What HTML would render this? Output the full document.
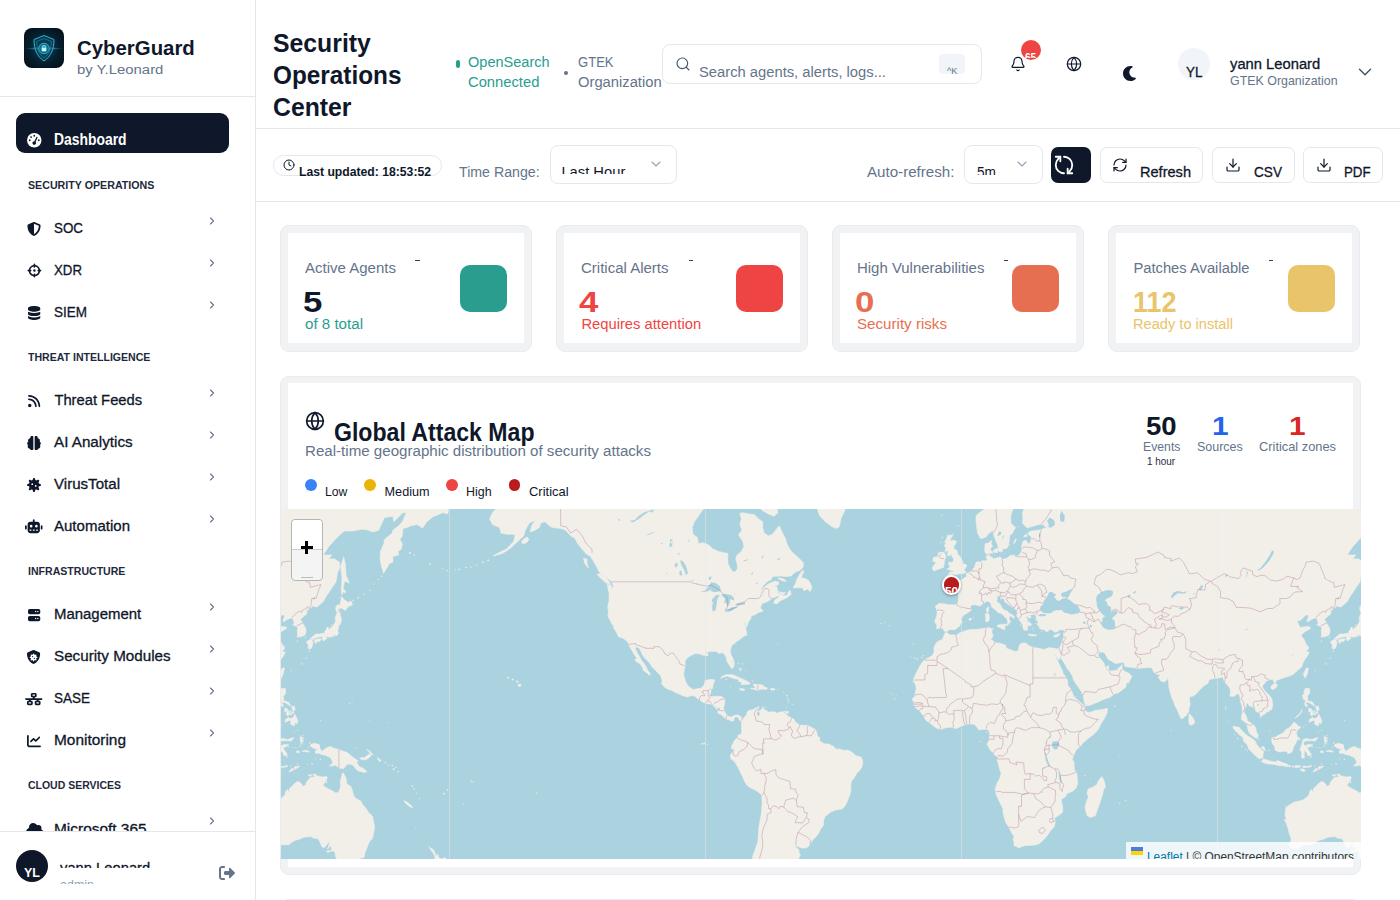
<!DOCTYPE html>
<html lang="en"><head><meta charset="utf-8"><title>CyberGuard - Security Operations Center</title>
<style>*{margin:0;padding:0}html,body{width:1400px;height:900px;overflow:hidden;background:#fff;font-family:"Liberation Sans",sans-serif}
.t{position:absolute;white-space:pre;line-height:1;transform-origin:0 0}.b{position:absolute}.clip{position:absolute;overflow:hidden}svg{display:block}</style></head>
<body>
<div class="b" style="left:255px;top:0px;width:1px;height:900px;background:#e5e7eb"></div>
<div class="b" style="left:0px;top:96px;width:255px;height:1px;background:#e5e7eb"></div>
<div class="b" style="left:0px;top:831px;width:255px;height:1px;background:#e5e7eb"></div>
<div class="b" style="left:16px;top:113px;width:212.5px;height:39.5px;background:#0f172a;border-radius:9px"></div>
<svg style="position:absolute;left:26.75px;top:133.35px;overflow:visible" width="14.50" height="14.5" viewBox="0 0 512 512" preserveAspectRatio="none"><path fill="#ffffff" d="M0 256a256 256 0 1 1 512 0 256 256 0 1 1-512 0M288 96a32 32 0 1 0-64 0 32 32 0 1 0 64 0m-32 320c35.3 0 64-28.7 64-64 0-16.2-6-31.1-16-42.3l69.5-138.9c5.9-11.9 1.1-26.3-10.7-32.2s-26.3-1.1-32.2 10.7l-69.5 138.9c-1.7-.1-3.4-.2-5.1-.2-35.3 0-64 28.7-64 64s28.7 64 64 64m-80-272a32 32 0 1 0-64 0 32 32 0 1 0 64 0M96 288a32 32 0 1 0 0-64 32 32 0 1 0 0 64m352-32a32 32 0 1 0-64 0 32 32 0 1 0 64 0"/></svg>
<svg style="position:absolute;left:27.00px;top:221.50px;overflow:visible" width="14.00" height="14" viewBox="0 0 512 512" preserveAspectRatio="none"><path fill="#0f172a" d="M256 0c4.6 0 9.2 1 13.4 2.9l188.4 79.9c22 9.3 38.4 31 38.3 57.2-.5 99.2-41.3 280.7-213.6 363.2-16.7 8-36.1 8-52.8 0C57.3 420.7 16.6 239.2 16.1 140c-.1-26.2 16.3-47.9 38.3-57.2L242.7 2.9C246.9 1 251.4 0 256 0m0 66.8v378.1c138-66.8 175.1-214.8 176-303.4L256 66.9z"/></svg>
<svg style="position:absolute;left:205.50px;top:215.00px;" width="12" height="12" viewBox="0 0 24 24" fill="none" stroke="#64748b" stroke-width="2.2" stroke-linecap="round" stroke-linejoin="round"><path d="m9 18 6-6-6-6"/></svg>
<svg style="position:absolute;left:26.57px;top:263.90px;overflow:visible" width="14.85" height="13.2" viewBox="0 0 576 512" preserveAspectRatio="none"><path fill="#0f172a" d="M288-16c17.7 0 32 14.3 32 32v18.3c98.1 14 175.7 91.6 189.7 189.7H528c17.7 0 32 14.3 32 32s-14.3 32-32 32h-18.3c-14 98.1-91.6 175.7-189.7 189.7V496c0 17.7-14.3 32-32 32s-32-14.3-32-32v-18.3c-98.1-14-175.7-91.6-189.7-189.7H48c-17.7 0-32-14.3-32-32s14.3-32 32-32h18.3c14-98.1 91.6-175.7 189.7-189.7V16c0-17.7 14.3-32 32-32M131.2 288c12.7 62.7 62.1 112.1 124.8 124.8V400c0-17.7 14.3-32 32-32s32 14.3 32 32v12.8c62.7-12.7 112.1-62.1 124.8-124.8H432c-17.7 0-32-14.3-32-32s14.3-32 32-32h12.8C432.1 161.3 382.7 111.9 320 99.2V112c0 17.7-14.3 32-32 32s-32-14.3-32-32V99.2c-62.7 12.7-112.1 62.1-124.8 124.8H144c17.7 0 32 14.3 32 32s-14.3 32-32 32zM288 208a48 48 0 1 1 0 96 48 48 0 1 1 0-96"/></svg>
<svg style="position:absolute;left:205.50px;top:257.00px;" width="12" height="12" viewBox="0 0 24 24" fill="none" stroke="#64748b" stroke-width="2.2" stroke-linecap="round" stroke-linejoin="round"><path d="m9 18 6-6-6-6"/></svg>
<svg style="position:absolute;left:27.88px;top:305.50px;overflow:visible" width="12.25" height="14" viewBox="0 0 448 512" preserveAspectRatio="none"><path fill="#0f172a" d="M448 205.8c-14.8 9.8-31.8 17.7-49.5 24-47 16.8-108.7 26.2-174.5 26.2s-127.6-9.5-174.5-26.2c-17.6-6.3-34.7-14.2-49.5-24V288c0 44.2 100.3 80 224 80s224-35.8 224-80zm0-77.8V80c0-44.2-100.3-80-224-80S0 35.8 0 80v48c0 44.2 100.3 80 224 80s224-35.8 224-80m-49.5 261.8C351.6 406.5 289.9 416 224 416s-127.6-9.5-174.5-26.2c-17.6-6.3-34.7-14.2-49.5-24V432c0 44.2 100.3 80 224 80s224-35.8 224-80v-66.2c-14.8 9.8-31.8 17.7-49.5 24"/></svg>
<svg style="position:absolute;left:205.50px;top:299.00px;" width="12" height="12" viewBox="0 0 24 24" fill="none" stroke="#64748b" stroke-width="2.2" stroke-linecap="round" stroke-linejoin="round"><path d="m9 18 6-6-6-6"/></svg>
<svg style="position:absolute;left:27.88px;top:393.50px;overflow:visible" width="12.25" height="14" viewBox="0 0 448 512" preserveAspectRatio="none"><path fill="#0f172a" d="M0 64c0-17.7 14.3-32 32-32 229.8 0 416 186.2 416 416 0 17.7-14.3 32-32 32s-32-14.3-32-32C384 253.6 226.4 96 32 96 14.3 96 0 81.7 0 64m0 352a64 64 0 1 1 128 0 64 64 0 1 1-128 0m32-256c159.1 0 288 128.9 288 288 0 17.7-14.3 32-32 32s-32-14.3-32-32c0-123.7-100.3-224-224-224-17.7 0-32-14.3-32-32s14.3-32 32-32"/></svg>
<svg style="position:absolute;left:205.50px;top:387.00px;" width="12" height="12" viewBox="0 0 24 24" fill="none" stroke="#64748b" stroke-width="2.2" stroke-linecap="round" stroke-linejoin="round"><path d="m9 18 6-6-6-6"/></svg>
<svg style="position:absolute;left:27.00px;top:435.50px;overflow:visible" width="14.00" height="14" viewBox="0 0 512 512" preserveAspectRatio="none"><path fill="#0f172a" d="M120 56c0-30.9 25.1-56 56-56h24c17.7 0 32 14.3 32 32v448c0 17.7-14.3 32-32 32h-32c-29.8 0-54.9-20.4-62-48h-2c-44.2 0-80-35.8-80-80 0-18 6-34.6 16-48-19.4-14.6-32-37.8-32-64 0-30.9 17.6-57.8 43.2-71.1-7.1-12-11.2-26-11.2-40.9 0-44.2 35.8-80 80-80zm272 0v24c44.2 0 80 35.8 80 80 0 15-4.1 29-11.2 40.9C486.5 214.2 504 241 504 272c0 26.2-12.6 49.4-32 64 10 13.4 16 30 16 48 0 44.2-35.8 80-80 80h-2c-7.1 27.6-32.2 48-62 48h-32c-17.7 0-32-14.3-32-32V32c0-17.7 14.3-32 32-32h24c30.9 0 56 25.1 56 56"/></svg>
<svg style="position:absolute;left:205.50px;top:429.00px;" width="12" height="12" viewBox="0 0 24 24" fill="none" stroke="#64748b" stroke-width="2.2" stroke-linecap="round" stroke-linejoin="round"><path d="m9 18 6-6-6-6"/></svg>
<svg style="position:absolute;left:27.00px;top:477.50px;overflow:visible" width="14.00" height="14" viewBox="0 0 512 512" preserveAspectRatio="none"><path fill="#0f172a" d="M296 40c0-22.1-17.9-40-40-40s-40 17.9-40 40c0 44.1-53.3 66.1-84.5 35-15.6-15.6-40.9-15.6-56.6 0s-15.6 40.9 0 56.6c31.2 31.2 9.1 84.5-35 84.5-22.1 0-40 17.9-40 40s17.9 40 40 40c44.1 0 66.1 53.3 35 84.5-15.6 15.6-15.6 40.9 0 56.6s40.9 15.6 56.6 0c31.2-31.2 84.5-9.1 84.5 35 0 22.1 17.9 40 40 40s40-17.9 40-40c0-44.1 53.3-66.1 84.5-35 15.6 15.6 40.9 15.6 56.6 0s15.6-40.9 0-56.6c-31.2-31.2-9.1-84.5 35-84.5 22.1 0 40-17.9 40-40s-17.9-40-40-40c-44.1 0-66.1-53.3-35-84.5 15.6-15.6 15.6-40.9 0-56.6s-40.9-15.6-56.6 0c-31.2 31.1-84.5 9.1-84.5-35M160 224a32 32 0 1 1 64 0 32 32 0 1 1-64 0m160 32a32 32 0 1 1 0 64 32 32 0 1 1 0-64"/></svg>
<svg style="position:absolute;left:205.50px;top:471.00px;" width="12" height="12" viewBox="0 0 24 24" fill="none" stroke="#64748b" stroke-width="2.2" stroke-linecap="round" stroke-linejoin="round"><path d="m9 18 6-6-6-6"/></svg>
<svg style="position:absolute;left:25.25px;top:519.50px;overflow:visible" width="17.50" height="14" viewBox="0 0 640 512" preserveAspectRatio="none"><path fill="#0f172a" d="M352 0c0-17.7-14.3-32-32-32s-32 14.3-32 32v64h-96c-53 0-96 43-96 96v224c0 53 43 96 96 96h256c53 0 96-43 96-96V160c0-53-43-96-96-96h-96zM160 368c0-13.3 10.7-24 24-24h32c13.3 0 24 10.7 24 24s-10.7 24-24 24h-32c-13.3 0-24-10.7-24-24m120 0c0-13.3 10.7-24 24-24h32c13.3 0 24 10.7 24 24s-10.7 24-24 24h-32c-13.3 0-24-10.7-24-24m120 0c0-13.3 10.7-24 24-24h32c13.3 0 24 10.7 24 24s-10.7 24-24 24h-32c-13.3 0-24-10.7-24-24M224 176a48 48 0 1 1 0 96 48 48 0 1 1 0-96m144 48a48 48 0 1 1 96 0 48 48 0 1 1-96 0m-304 0c0-17.7-14.3-32-32-32S0 206.3 0 224v96c0 17.7 14.3 32 32 32s32-14.3 32-32zm544-32c-17.7 0-32 14.3-32 32v96c0 17.7 14.3 32 32 32s32-14.3 32-32v-96c0-17.7-14.3-32-32-32"/></svg>
<svg style="position:absolute;left:205.50px;top:513.00px;" width="12" height="12" viewBox="0 0 24 24" fill="none" stroke="#64748b" stroke-width="2.2" stroke-linecap="round" stroke-linejoin="round"><path d="m9 18 6-6-6-6"/></svg>
<svg style="position:absolute;left:27.88px;top:607.50px;overflow:visible" width="12.25" height="14" viewBox="0 0 448 512" preserveAspectRatio="none"><path fill="#0f172a" d="M64 32C28.7 32 0 60.7 0 96v64c0 35.3 28.7 64 64 64h320c35.3 0 64-28.7 64-64V96c0-35.3-28.7-64-64-64zm216 72a24 24 0 1 1 0 48 24 24 0 1 1 0-48m56 24a24 24 0 1 1 48 0 24 24 0 1 1-48 0M64 288c-35.3 0-64 28.7-64 64v64c0 35.3 28.7 64 64 64h320c35.3 0 64-28.7 64-64v-64c0-35.3-28.7-64-64-64zm216 72a24 24 0 1 1 0 48 24 24 0 1 1 0-48m56 24a24 24 0 1 1 48 0 24 24 0 1 1-48 0"/></svg>
<svg style="position:absolute;left:205.50px;top:601.00px;" width="12" height="12" viewBox="0 0 24 24" fill="none" stroke="#64748b" stroke-width="2.2" stroke-linecap="round" stroke-linejoin="round"><path d="m9 18 6-6-6-6"/></svg>
<svg style="position:absolute;left:27.00px;top:649.50px;overflow:visible" width="14.00" height="14" viewBox="0 0 512 512" preserveAspectRatio="none"><path fill="#0f172a" d="M253.4 2.9C249.2 1 244.7 0 240 0s-9.2 1-13.4 2.9L38.3 82.8C16.3 92.1-.1 113.8 0 140c.5 99.2 41.3 280.7 213.6 363.2 16.7 8 36.1 8 52.8 0C438.8 420.7 479.6 239.2 480 140c.1-26.2-16.3-47.9-38.3-57.2zM240 128c13.3 0 24 10.7 24 24 0 22.9 27.7 34.4 43.9 18.2 9.4-9.4 24.6-9.4 33.9 0s9.4 24.6 0 33.9c-16.2 16.2-4.7 43.9 18.2 43.9 13.3 0 24 10.7 24 24s-10.7 24-24 24c-22.9 0-34.4 27.7-18.2 43.9 9.4 9.4 9.4 24.6 0 33.9s-24.6 9.4-33.9 0c-16.2-16.2-43.9-4.7-43.9 18.2 0 13.3-10.7 24-24 24s-24-10.7-24-24c0-22.9-27.7-34.4-43.9-18.2-9.4 9.4-24.6 9.4-33.9 0s-9.4-24.6 0-33.9c16.2-16.2 4.7-43.9-18.2-43.9-13.3 0-24-10.7-24-24s10.7-24 24-24c22.9 0 34.4-27.7 18.2-43.9-9.4-9.4-9.4-24.6 0-33.9s24.6-9.4 33.9 0c16.2 16.2 43.9 4.7 43.9-18.2 0-13.3 10.7-24 24-24m-32 136a24 24 0 1 0 0-48 24 24 0 1 0 0 48m88 40a24 24 0 1 0-48 0 24 24 0 1 0 48 0"/></svg>
<svg style="position:absolute;left:205.50px;top:643.00px;" width="12" height="12" viewBox="0 0 24 24" fill="none" stroke="#64748b" stroke-width="2.2" stroke-linecap="round" stroke-linejoin="round"><path d="m9 18 6-6-6-6"/></svg>
<svg style="position:absolute;left:25.25px;top:691.50px;overflow:visible" width="17.50" height="14" viewBox="0 0 576 512" preserveAspectRatio="none"><path fill="#0f172a" d="M248 88h80v48h-80zm-8-56c-26.5 0-48 21.5-48 48v64c0 26.5 21.5 48 48 48h16v32H32c-17.7 0-32 14.3-32 32s14.3 32 32 32h96v32h-16c-26.5 0-48 21.5-48 48v64c0 26.5 21.5 48 48 48h96c26.5 0 48-21.5 48-48v-64c0-26.5-21.5-48-48-48h-16v-32h192v32h-16c-26.5 0-48 21.5-48 48v64c0 26.5 21.5 48 48 48h96c26.5 0 48-21.5 48-48v-64c0-26.5-21.5-48-48-48h-16v-32h96c17.7 0 32-14.3 32-32s-14.3-32-32-32H320v-32h16c26.5 0 48-21.5 48-48V80c0-26.5-21.5-48-48-48zm208 344h8v48h-80v-48zm-256 0h8v48h-80v-48z"/></svg>
<svg style="position:absolute;left:205.50px;top:685.00px;" width="12" height="12" viewBox="0 0 24 24" fill="none" stroke="#64748b" stroke-width="2.2" stroke-linecap="round" stroke-linejoin="round"><path d="m9 18 6-6-6-6"/></svg>
<svg style="position:absolute;left:27.00px;top:733.50px;overflow:visible" width="14.00" height="14" viewBox="0 0 512 512" preserveAspectRatio="none"><path fill="#0f172a" d="M64 64c0-17.7-14.3-32-32-32S0 46.3 0 64v336c0 44.2 35.8 80 80 80h400c17.7 0 32-14.3 32-32s-14.3-32-32-32H80c-8.8 0-16-7.2-16-16zm406.6 86.6c12.5-12.5 12.5-32.8 0-45.3s-32.8-12.5-45.3 0L320 210.7l-57.4-57.3c-12.5-12.5-32.8-12.5-45.3 0l-96 96c-12.5 12.5-12.5 32.8 0 45.3s32.8 12.5 45.3 0l73.4-73.4 57.4 57.4c12.5 12.5 32.8 12.5 45.3 0l128-128z"/></svg>
<svg style="position:absolute;left:205.50px;top:727.00px;" width="12" height="12" viewBox="0 0 24 24" fill="none" stroke="#64748b" stroke-width="2.2" stroke-linecap="round" stroke-linejoin="round"><path d="m9 18 6-6-6-6"/></svg>
<div class="clip" style="left:0;top:800px;width:255px;height:31px"><svg style="position:absolute;left:25.88px;top:21.85px;overflow:visible" width="17.44" height="15.5" viewBox="0 0 576 512" preserveAspectRatio="none"><path fill="#0f172a" d="M0 336c0 79.5 64.5 144 144 144h304c70.7 0 128-57.3 128-128 0-51.6-30.5-96.1-74.5-116.3 6.7-13.1 10.5-28 10.5-43.7 0-53-43-96-96-96-17.7 0-34.2 4.8-48.4 13.1C343.5 63.3 295.4 32 240 32 160.5 32 96 96.5 96 176c0 8 .7 15.9 1.9 23.5C41 218.7 0 272.6 0 336"/></svg></div>
<svg style="position:absolute;left:205.50px;top:815.00px;" width="12" height="12" viewBox="0 0 24 24" fill="none" stroke="#64748b" stroke-width="2.2" stroke-linecap="round" stroke-linejoin="round"><path d="m9 18 6-6-6-6"/></svg>
<div class="b" style="left:16px;top:850px;width:32px;height:32px;background:#0f172a;border-radius:50%"></div>
<svg style="position:absolute;left:219.40px;top:864.60px;overflow:visible" width="16.00" height="16" viewBox="0 0 512 512" preserveAspectRatio="none"><path fill="#64748b" d="M505 273c9.4-9.4 9.4-24.6 0-33.9L361 95c-6.9-6.9-17.2-8.9-26.2-5.2S320 102.3 320 112v80H208c-26.5 0-48 21.5-48 48v32c0 26.5 21.5 48 48 48h112v80c0 9.7 5.8 18.5 14.8 22.2s19.3 1.7 26.2-5.2zM160 96c17.7 0 32-14.3 32-32s-14.3-32-32-32H96C43 32 0 75 0 128v256c0 53 43 96 96 96h64c17.7 0 32-14.3 32-32s-14.3-32-32-32H96c-17.7 0-32-14.3-32-32V128c0-17.7 14.3-32 32-32z"/></svg>
<svg style="position:absolute;left:24px;top:28px" width="40" height="40" viewBox="0 0 40 40">
<defs><radialGradient id="lg" cx="50%" cy="50%" r="65%"><stop offset="0" stop-color="#0d4a63"/><stop offset="0.55" stop-color="#06202f"/><stop offset="1" stop-color="#030f18"/></radialGradient>
<radialGradient id="gl" cx="50%" cy="50%" r="50%"><stop offset="0" stop-color="#7fe9ff" stop-opacity="0.9"/><stop offset="1" stop-color="#22b8e0" stop-opacity="0"/></radialGradient>
<clipPath id="lc"><rect width="40" height="40" rx="8"/></clipPath></defs>
<g clip-path="url(#lc)"><rect width="40" height="40" fill="url(#lg)"/>
<ellipse cx="20" cy="20.500" rx="19" ry="1.6" fill="url(#gl)"/>
<path d="M20 7.5 L30 11.500 C30 21 27 28.500 20 33 C13 28.500 10 21 10 11.500 Z" fill="#0b4258" fill-opacity="0.55" stroke="#2fb6d8" stroke-width="1"/>
<path d="M20 10.500 L27.400 13.500 C27.300 20.500 25 26.500 20 30 C15 26.500 12.700 20.500 12.600 13.500 Z" fill="none" stroke="#1c86a6" stroke-width="0.7"/>
<circle cx="20" cy="20.500" r="5.200" fill="#12607d" stroke="#39c6e8" stroke-width="0.8"/>
<circle cx="20" cy="20.500" r="3.400" fill="#2fb6d8" fill-opacity="0.6"/>
<rect x="17.800" y="19.800" width="4.400" height="3.400" rx="0.6" fill="#c9f6ff"/>
<path d="M18.600 19.800 v-1 a1.400 1.400 0 0 1 2.800 0 v1" fill="none" stroke="#c9f6ff" stroke-width="0.7"/>
</g></svg>
<div class="b" style="left:256px;top:128px;width:1144px;height:1px;background:#e5e7eb"></div>
<div class="b" style="left:256px;top:201px;width:1144px;height:1px;background:#e5e7eb"></div>
<div class="b" style="left:456px;top:60px;width:3.6px;height:8px;background:#2a9d8f;border-radius:2px"></div>
<div class="b" style="left:563.6px;top:71px;width:4px;height:4px;background:#64748b;border-radius:50%"></div>
<div class="b" style="left:662px;top:44px;width:320px;height:40px;border:1px solid #e4e7ec;border-radius:8px;box-sizing:border-box;background:#fff"></div>
<svg style="position:absolute;left:674.60px;top:56.20px;" width="16" height="16" viewBox="0 0 24 24" fill="none" stroke="#475569" stroke-width="1.7" stroke-linecap="round" stroke-linejoin="round"><path d="m21 21-4.34-4.34"/><circle cx="11" cy="11" r="8"/></svg>
<div class="b" style="left:939.4px;top:54px;width:25.4px;height:20px;background:#f1f5f9;border-radius:4px"></div>
<svg style="position:absolute;left:1009.50px;top:56.00px;" width="16" height="16" viewBox="0 0 24 24" fill="none" stroke="#0f172a" stroke-width="1.8" stroke-linecap="round" stroke-linejoin="round"><path d="M10.268 21a2 2 0 0 0 3.464 0"/><path d="M3.262 15.326A1 1 0 0 0 4 17h16a1 1 0 0 0 .74-1.673C19.41 13.956 18 12.499 18 8A6 6 0 0 0 6 8c0 4.499-1.411 5.956-2.738 7.326"/></svg>
<div class="b" style="left:1021px;top:39.6px;width:20.4px;height:20.4px;background:#ef4444;border-radius:50%"></div>
<svg style="position:absolute;left:1065.60px;top:55.60px;" width="16" height="16" viewBox="0 0 24 24" fill="none" stroke="#0f172a" stroke-width="1.8" stroke-linecap="round" stroke-linejoin="round"><circle cx="12" cy="12" r="10"/><path d="M12 2a14.500 14.500 0 0 0 0 20 14.500 14.500 0 0 0 0-20"/><path d="M2 12h20"/></svg>
<svg style="position:absolute;left:1122.50px;top:65.80px;overflow:visible" width="15.00" height="15" viewBox="0 0 512 512" preserveAspectRatio="none"><path fill="#0f172a" d="M256 0C114.6 0 0 114.6 0 256s114.6 256 256 256c68.8 0 131.3-27.2 177.3-71.4 7.3-7 9.4-17.9 5.3-27.1s-13.7-14.9-23.8-14.1c-4.9.4-9.8.6-14.8.6-101.6 0-184-82.4-184-184 0-72.1 41.5-134.6 102.1-164.8 9.1-4.5 14.3-14.3 13.1-24.4s-8.6-18.3-18.5-20.5C294.4 2.2 275.4 0 256 0"/></svg>
<div class="b" style="left:1178px;top:48.4px;width:31.5px;height:31.5px;background:#f1f5f9;border-radius:50%"></div>
<svg style="position:absolute;left:1354.00px;top:61.40px;" width="22" height="22" viewBox="0 0 24 24" fill="none" stroke="#475569" stroke-width="1.6" stroke-linecap="round" stroke-linejoin="round"><path d="m6 9 6 6 6-6"/></svg>
<div class="b" style="left:272.5px;top:154.5px;width:169.5px;height:21.5px;border:1px solid #e4e7ec;border-radius:11px;box-sizing:border-box;background:#fff"></div>
<svg style="position:absolute;left:282.60px;top:159.00px;" width="12" height="12" viewBox="0 0 24 24" fill="none" stroke="#0f172a" stroke-width="2" stroke-linecap="round" stroke-linejoin="round"><path d="M12 6v6l4 2"/><circle cx="12" cy="12" r="10"/></svg>
<div class="b" style="left:549.5px;top:145.4px;width:127px;height:39px;border:1px solid #e4e7ec;border-radius:8px;box-sizing:border-box;background:#fff"></div>
<svg style="position:absolute;left:648.00px;top:156.40px;" width="16" height="16" viewBox="0 0 24 24" fill="none" stroke="#94a3b8" stroke-width="1.6" stroke-linecap="round" stroke-linejoin="round"><path d="m6 9 6 6 6-6"/></svg>
<div class="b" style="left:963.5px;top:145.4px;width:79px;height:39px;border:1px solid #e4e7ec;border-radius:8px;box-sizing:border-box;background:#fff"></div>
<svg style="position:absolute;left:1014.40px;top:156.40px;" width="16" height="16" viewBox="0 0 24 24" fill="none" stroke="#94a3b8" stroke-width="1.6" stroke-linecap="round" stroke-linejoin="round"><path d="m6 9 6 6 6-6"/></svg>
<div class="b" style="left:1051px;top:147px;width:39.6px;height:35.5px;background:#0f172a;border-radius:7px"></div>
<svg style="position:absolute;left:1053.40px;top:153.80px;transform:rotate(90deg)" width="22" height="22" viewBox="0 0 24 24" fill="none" stroke="#ffffff" stroke-width="2" stroke-linecap="round" stroke-linejoin="round"><path d="M3 12a9 9 0 0 1 9-9 9.750 9.750 0 0 1 6.740 2.740L21 8"/><path d="M21 3v5h-5"/><path d="M21 12a9 9 0 0 1-9 9 9.750 9.750 0 0 1-6.740-2.740L3 16"/><path d="M8 16H3v5"/></svg>
<div class="b" style="left:1099.5px;top:147px;width:103.5px;height:35.5px;border:1px solid #e4e7ec;border-radius:7px;box-sizing:border-box;background:#fff"></div>
<div class="b" style="left:1212.4px;top:147px;width:82.2px;height:35.5px;border:1px solid #e4e7ec;border-radius:7px;box-sizing:border-box;background:#fff"></div>
<div class="b" style="left:1303.4px;top:147px;width:80px;height:35.5px;border:1px solid #e4e7ec;border-radius:7px;box-sizing:border-box;background:#fff"></div>
<svg style="position:absolute;left:1111.60px;top:157.00px;" width="16" height="16" viewBox="0 0 24 24" fill="none" stroke="#0f172a" stroke-width="1.8" stroke-linecap="round" stroke-linejoin="round"><path d="M3 12a9 9 0 0 1 9-9 9.750 9.750 0 0 1 6.740 2.740L21 8"/><path d="M21 3v5h-5"/><path d="M21 12a9 9 0 0 1-9 9 9.750 9.750 0 0 1-6.740-2.740L3 16"/><path d="M8 16H3v5"/></svg>
<svg style="position:absolute;left:1225.00px;top:157.00px;" width="16" height="16" viewBox="0 0 24 24" fill="none" stroke="#0f172a" stroke-width="1.8" stroke-linecap="round" stroke-linejoin="round"><path d="M12 15V3"/><path d="M21 15v4a2 2 0 0 1-2 2H5a2 2 0 0 1-2-2v-4"/><path d="m7 10 5 5 5-5"/></svg>
<svg style="position:absolute;left:1316.00px;top:157.00px;" width="16" height="16" viewBox="0 0 24 24" fill="none" stroke="#0f172a" stroke-width="1.8" stroke-linecap="round" stroke-linejoin="round"><path d="M12 15V3"/><path d="M21 15v4a2 2 0 0 1-2 2H5a2 2 0 0 1-2-2v-4"/><path d="m7 10 5 5 5-5"/></svg>
<div class="b" style="left:280px;top:225px;width:252px;height:127px;background:#f1f2f4;border:1px solid #e9ebee;border-radius:9px;box-sizing:border-box"></div>
<div class="b" style="left:287.6px;top:233px;width:236.8px;height:110px;background:#fff"></div>
<div class="b" style="left:460px;top:264.6px;width:47.4px;height:47.4px;background:#2a9d8f;border-radius:10px"></div>
<div class="b" style="left:415.4px;top:259.6px;width:4.6px;height:1.2px;background:#334155"></div>
<div class="b" style="left:556px;top:225px;width:252px;height:127px;background:#f1f2f4;border:1px solid #e9ebee;border-radius:9px;box-sizing:border-box"></div>
<div class="b" style="left:563.6px;top:233px;width:236.8px;height:110px;background:#fff"></div>
<div class="b" style="left:736px;top:264.6px;width:47.4px;height:47.4px;background:#ef4444;border-radius:10px"></div>
<div class="b" style="left:688.7px;top:259.6px;width:4.6px;height:1.2px;background:#334155"></div>
<div class="b" style="left:832px;top:225px;width:252px;height:127px;background:#f1f2f4;border:1px solid #e9ebee;border-radius:9px;box-sizing:border-box"></div>
<div class="b" style="left:839.6px;top:233px;width:236.8px;height:110px;background:#fff"></div>
<div class="b" style="left:1012px;top:264.6px;width:47.4px;height:47.4px;background:#e76f51;border-radius:10px"></div>
<div class="b" style="left:1003.7px;top:259.6px;width:4.6px;height:1.2px;background:#334155"></div>
<div class="b" style="left:1108px;top:225px;width:252px;height:127px;background:#f1f2f4;border:1px solid #e9ebee;border-radius:9px;box-sizing:border-box"></div>
<div class="b" style="left:1115.6px;top:233px;width:236.8px;height:110px;background:#fff"></div>
<div class="b" style="left:1288px;top:264.6px;width:47.4px;height:47.4px;background:#e9c46a;border-radius:10px"></div>
<div class="b" style="left:1268.7px;top:259.6px;width:4.6px;height:1.2px;background:#334155"></div>
<div class="b" style="left:280px;top:375.5px;width:1080.5px;height:499.5px;background:#f1f2f4;border:1px solid #e9ebee;border-radius:9px;box-sizing:border-box"></div>
<div class="b" style="left:287.6px;top:383px;width:1065.4px;height:484px;background:#fff"></div>
<svg style="position:absolute;left:304.60px;top:411.40px;" width="20" height="20" viewBox="0 0 24 24" fill="none" stroke="#0f172a" stroke-width="2" stroke-linecap="round" stroke-linejoin="round"><circle cx="12" cy="12" r="10"/><path d="M12 2a14.500 14.500 0 0 0 0 20 14.500 14.500 0 0 0 0-20"/><path d="M2 12h20"/></svg>
<div class="b" style="left:304.90000000000003px;top:479.3px;width:11.8px;height:11.8px;background:#3b82f6;border-radius:50%"></div>
<div class="b" style="left:364.3px;top:479.3px;width:11.8px;height:11.8px;background:#eab308;border-radius:50%"></div>
<div class="b" style="left:446.1px;top:479.3px;width:11.8px;height:11.8px;background:#ef4444;border-radius:50%"></div>
<div class="b" style="left:508.5px;top:479.3px;width:11.8px;height:11.8px;background:#b91c1c;border-radius:50%"></div>
<div class="b" style="left:280px;top:899px;width:1080.5px;height:20px;background:#f1f2f4;border:1px solid #e9ebee;border-radius:9px;box-sizing:border-box"></div>
<svg style="position:absolute;left:280.5px;top:508.6px" width="1080" height="350" viewBox="280.5 508.6 1080 350"><rect x="280.5" y="508.6" width="1080" height="350" fill="#aad3df"/><g id="wm"><path d="M483.4 492.1L493.4 499.5L503.3 499.5L503.3 505.4L494.8 509.2L492.0 512.3L489.1 518.3L492.0 524.2L499.1 527.1L500.5 532.7L506.2 533.8L510.5 533.8L514.7 534.3L513.3 540.8L506.2 548.6L500.5 551.1L492.5 555.6L500.5 553.6L506.2 550.6L511.9 546.0L517.6 540.8L523.3 535.4L524.7 529.9L528.9 522.5L534.6 520.1L531.2 525.4L529.5 531.6L534.6 529.9L538.9 527.1L540.3 522.5L544.6 521.3L547.4 524.2L551.7 527.1L560.2 528.2L564.5 529.3L570.2 535.4L574.5 538.1L577.3 543.4L581.6 548.6L585.8 553.6L590.1 556.1L592.9 560.9L595.8 565.6L597.8 570.2L600.1 573.4L605.7 577.0L610.0 580.1L611.4 581.4L612.9 585.7L612.0 589.0L610.9 585.2L606.6 584.0L608.0 590.3L608.6 593.2L608.6 600.1L607.2 606.7L608.0 611.7L607.5 615.9L609.2 619.2L611.4 623.6L612.9 625.4L613.1 627.6L614.6 629.7L616.3 632.9L618.3 636.7L621.4 637.4L624.2 638.8L627.6 642.2L628.2 643.9L629.6 647.2L631.9 650.9L634.2 654.8L636.5 658.0L634.2 659.3L636.2 661.6L639.3 663.2L642.2 667.3L642.7 669.8L647.6 673.5L648.7 674.8L650.1 673.8L647.6 670.4L645.6 666.6L643.6 663.2L641.0 660.0L639.0 656.1L636.5 652.2L635.0 648.2L634.8 646.2L638.5 647.5L640.4 650.9L642.2 654.8L645.0 658.7L647.0 660.3L649.8 663.5L651.3 666.3L654.1 668.8L657.5 672.6L659.8 675.1L661.2 678.1L661.8 681.5L660.9 683.0L663.2 686.0L666.9 688.7L671.2 689.9L674.0 691.7L677.4 693.2L682.5 695.3L686.8 696.5L691.1 695.3L693.9 695.6L698.2 699.1L702.5 701.8L706.7 703.2L711.6 703.8L713.0 705.3L715.3 707.9L717.5 710.2L717.2 712.5L719.5 713.7L722.4 715.4L723.8 717.4L725.5 718.6L728.6 719.4L730.9 720.9L732.9 720.6L733.7 718.0L735.2 716.3L738.0 717.1L738.9 720.0L740.9 721.2L741.4 717.1L738.0 714.8L734.9 714.6L730.9 716.6L728.1 716.0L725.2 713.1L723.5 710.5L723.2 707.3L724.1 702.9L724.6 698.5L720.9 696.2L716.7 695.9L712.4 696.2L709.6 696.2L708.4 695.9L710.1 692.6L710.7 688.7L712.1 688.1L712.4 685.1L713.3 682.1L714.4 679.7L712.4 679.1L708.7 679.1L704.4 680.3L703.9 683.6L702.5 686.0L700.2 687.8L696.8 688.4L692.5 689.0L689.7 687.2L687.7 685.7L685.4 681.8L684.0 677.5L683.1 674.4L683.7 669.8L684.8 665.4L684.5 660.9L686.8 657.4L691.1 654.8L694.5 653.2L699.6 653.5L702.5 654.8L705.3 655.1L707.6 655.4L706.7 651.5L711.0 651.2L715.3 650.9L718.7 653.2L721.8 652.2L723.8 653.8L725.8 657.1L726.1 660.3L728.1 663.5L729.5 665.7L730.9 667.9L732.6 667.6L733.5 665.1L733.7 661.9L732.3 657.7L730.3 653.8L729.8 649.9L730.9 645.5L733.7 643.2L736.6 640.8L739.4 639.1L742.3 636.7L744.3 635.3L746.5 634.6L745.7 630.0L745.1 628.3L744.3 624.7L744.0 620.3L745.1 622.9L745.4 627.6L747.4 623.6L748.0 621.1L746.5 619.2L748.3 621.1L750.2 618.5L750.8 615.5L755.1 614.0L757.9 612.1L760.8 611.4L762.2 611.0L762.2 609.8L759.9 607.9L760.5 605.2L762.2 602.8L765.0 602.0L767.9 600.5L770.7 598.9L770.7 597.3L773.6 597.3L776.4 596.0L777.8 594.8L778.4 596.8L774.1 599.7L773.3 602.8L776.4 603.6L779.3 600.5L782.1 599.3L786.4 597.3L790.6 594.0L789.8 589.9L787.8 591.5L786.4 595.2L782.1 594.8L777.8 592.8L777.0 589.5L776.4 586.5L773.6 585.7L777.8 584.4L778.4 581.8L775.0 580.5L770.7 582.2L766.5 584.4L762.2 588.6L758.8 590.7L762.2 586.5L763.6 584.4L766.5 581.4L770.7 579.2L772.1 576.1L779.3 575.7L785.5 576.1L790.6 575.7L794.9 571.6L799.2 570.2L802.6 567.0L802.9 562.3L799.2 558.5L794.9 554.6L792.1 552.1L789.2 548.6L786.4 543.4L784.9 538.1L782.1 532.7L778.7 525.4L775.0 529.9L772.1 533.8L767.9 535.4L763.6 532.7L762.2 527.1L762.2 521.3L757.9 518.3L753.7 514.1L748.0 513.5L742.3 512.3L739.4 512.9L740.9 518.3L739.4 524.2L741.4 529.9L738.0 534.3L742.3 540.8L743.4 546.0L740.9 551.1L736.6 554.6L735.2 558.5L736.6 563.3L737.2 567.9L735.2 571.2L732.3 571.6L729.5 567.0L727.5 563.3L727.2 558.5L727.5 553.1L722.4 552.1L718.1 551.1L712.4 548.6L708.1 544.5L702.5 542.4L698.2 543.4L696.8 537.0L692.5 533.8L691.6 527.1L693.9 521.3L698.2 515.3L702.5 509.2L705.3 502.8L711.0 499.5L716.7 489.3L719.5 474.8L719.5 441.4L517.6 441.4L500.5 458.9L489.1 470.9L494.8 482.2L500.5 485.8L494.8 487.9ZM750.8 499.5L756.5 504.7L762.2 510.4L767.9 513.5L773.6 515.9L777.3 512.3L776.4 506.0L780.7 499.5L767.9 482.2L750.8 482.2ZM713.8 505.4L718.1 507.9L725.2 507.3L730.9 505.4L732.3 499.5L722.4 492.8L713.8 496.2ZM836.4 528.2L831.9 526.5L824.8 521.3L819.1 515.3L814.8 502.8L810.5 489.3L807.7 458.9L876.0 441.4L898.7 458.9L870.3 474.8L856.1 490.7L847.5 496.2L844.7 509.2L840.4 518.3L839.0 525.9ZM610.3 584.0L605.7 582.7L601.5 579.2L596.4 573.9L598.6 573.4L604.3 576.1L607.2 579.2ZM588.1 567.9L584.4 563.3L583.0 558.0L586.4 558.5L586.7 563.3ZM521.8 543.4L526.1 542.4L528.4 539.2L526.7 536.5L523.3 538.7L521.0 541.3ZM792.6 587.4L794.9 583.5L796.3 579.2L799.2 573.9L802.0 569.8L803.4 571.2L800.6 577.0L803.4 577.9L807.7 579.6L810.0 583.1L811.4 587.4L809.7 591.1L807.1 588.6L803.4 590.3L802.0 587.4L797.7 587.4ZM777.8 577.4L783.5 578.7L785.8 580.9L782.1 580.5L777.8 578.3ZM778.1 591.1L782.1 592.4L784.9 591.9L783.5 594.0L779.8 593.2ZM719.8 677.8L722.4 675.4L726.6 674.1L732.3 674.4L736.6 676.3L740.9 678.1L745.1 680.0L750.2 683.0L748.0 683.9L740.3 684.1L741.7 681.8L738.0 681.2L738.6 679.1L733.7 678.1L729.5 676.9L726.6 675.7L722.9 676.9ZM749.7 687.8L753.7 689.0L757.4 690.2L759.3 689.0L762.2 688.7L766.2 689.0L766.7 687.5L763.3 686.3L762.2 684.5L757.4 684.2L753.7 683.9L752.5 684.5L754.2 686.0L755.1 687.8ZM738.6 688.7L741.7 690.2L744.3 689.6L743.7 688.7L740.9 688.1ZM770.2 689.6L774.4 689.5L774.4 688.4L770.2 688.1ZM738.9 668.2L740.0 670.7L740.6 669.5L739.7 667.6ZM785.2 711.1L787.8 710.8L787.8 712.8L785.2 712.8ZM741.4 717.1L742.8 718.9L744.3 716.0L746.3 714.6L746.5 711.7L748.5 709.9L752.2 709.3L755.9 707.3L758.5 706.2L758.5 708.2L757.1 710.2L757.6 711.4L761.3 708.8L762.2 706.7L763.6 708.8L767.0 710.8L767.9 711.7L773.6 711.4L776.4 712.8L779.3 711.7L784.9 711.1L782.7 712.0L785.5 713.7L787.8 716.0L790.6 717.4L793.5 718.9L794.9 721.7L797.7 723.7L799.2 724.9L804.9 724.9L807.7 725.2L812.0 727.5L814.8 729.2L816.2 731.7L817.1 736.0L819.1 736.9L819.1 740.3L821.9 742.3L823.3 743.1L824.8 743.7L827.6 743.4L833.3 746.0L835.3 748.8L839.0 748.5L843.3 750.0L847.5 749.7L851.8 752.2L855.5 755.4L860.3 756.5L861.2 757.4L862.3 762.2L861.7 766.0L858.9 770.3L856.1 773.2L853.2 778.4L851.8 779.0L850.4 783.4L850.4 789.3L849.8 793.2L848.4 796.8L847.0 800.7L844.7 805.3L841.8 808.6L838.4 809.0L834.2 809.9L829.6 812.1L824.8 816.1L823.1 819.9L823.1 824.7L820.5 828.0L818.2 832.9L814.8 837.2L812.8 838.9L809.4 843.6L807.7 846.4L804.9 847.7L801.4 847.7L796.9 846.0L795.2 844.6L794.9 846.4L798.3 849.1L798.6 852.6L800.0 854.8L797.7 858.7L793.5 861.6L787.8 862.3L784.4 862.0L784.1 867.9L776.4 869.8L776.4 877.4L769.3 889.4L773.6 897.7L765.0 910.9L766.5 920.1L759.3 924.9L750.8 915.5L748.0 897.7L750.8 881.4L752.2 871.7L751.7 864.2L752.2 855.8L754.5 849.8L757.4 841.2L757.9 834.5L758.2 828.0L759.3 821.5L760.5 815.2L761.1 810.5L761.6 802.8L761.3 795.0L758.5 792.3L755.1 789.9L750.8 787.8L746.5 784.9L744.3 781.3L742.0 776.1L739.4 770.9L737.7 767.4L735.2 763.1L733.7 760.8L730.9 758.8L730.3 758.2L730.0 754.5L732.3 751.7L733.7 750.2L734.3 748.8L732.9 749.1L730.9 748.0L731.5 744.5L732.9 742.6L733.7 740.3L735.2 738.9L737.2 737.4L737.7 734.6L740.3 734.0L741.4 730.9L740.9 727.5L741.1 724.6L740.9 721.2ZM944.5 632.5L946.2 632.2L949.9 634.6L952.8 634.3L955.6 635.0L958.5 632.9L962.7 631.1L965.6 630.0L969.8 629.0L975.5 629.0L981.2 628.3L986.9 627.6L989.2 627.2L990.6 628.3L992.6 627.9L991.2 630.4L991.5 632.5L992.6 634.6L992.0 637.0L989.7 638.8L992.0 639.8L994.0 641.8L996.9 642.8L998.8 642.5L1002.5 643.9L1004.8 644.5L1006.0 647.9L1009.7 649.2L1013.9 650.9L1016.2 651.2L1018.2 648.9L1018.5 645.2L1021.0 642.8L1023.9 642.5L1027.3 643.9L1027.3 644.9L1032.4 646.9L1038.1 647.9L1043.8 649.2L1046.6 647.9L1049.5 647.2L1053.2 647.9L1053.7 652.2L1054.3 654.8L1055.7 657.7L1057.4 660.9L1059.4 665.1L1061.7 669.8L1062.6 672.9L1066.0 677.5L1067.1 680.6L1067.4 684.8L1070.8 689.6L1073.1 695.6L1073.7 696.8L1076.5 699.1L1079.3 701.5L1082.2 703.8L1084.5 705.9L1083.6 708.5L1086.5 711.7L1089.3 712.0L1095.0 709.9L1100.7 709.3L1106.9 707.9L1106.7 712.0L1104.9 716.0L1103.0 719.4L1100.7 723.2L1097.8 728.9L1093.6 733.7L1090.4 736.0L1086.5 738.9L1082.2 742.8L1079.3 746.5L1075.6 749.4L1074.2 753.1L1072.8 755.9L1071.7 759.4L1073.4 761.1L1073.7 766.0L1074.2 770.3L1076.2 771.7L1076.8 777.5L1077.1 783.4L1075.6 787.8L1072.2 790.8L1066.5 793.2L1065.1 796.2L1060.6 799.2L1061.7 804.3L1062.3 809.0L1062.0 812.1L1058.0 815.2L1054.6 817.1L1054.0 818.3L1054.9 821.5L1053.7 826.3L1050.9 829.6L1049.5 830.9L1046.6 835.5L1042.4 840.2L1038.1 843.6L1034.4 844.6L1029.6 845.0L1023.9 845.3L1018.2 847.4L1014.8 845.7L1013.6 845.3L1013.4 841.2L1012.5 839.5L1013.4 836.2L1010.5 831.2L1008.2 826.7L1005.4 822.5L1004.0 818.3L1002.5 812.1L1002.5 808.3L999.7 802.8L996.9 796.8L994.9 792.3L994.9 787.8L996.3 783.4L999.4 777.5L1000.6 773.2L998.8 767.4L997.4 761.7L996.3 758.8L995.4 755.9L993.4 753.1L989.7 749.7L987.8 746.0L986.3 743.7L988.3 740.8L988.9 737.4L989.2 734.6L988.9 731.7L988.3 730.3L986.3 728.9L984.9 728.9L981.2 729.2L978.4 729.5L976.4 726.6L974.1 724.0L971.0 723.5L967.0 723.7L964.7 724.3L961.3 725.5L958.5 726.9L955.3 728.3L952.2 727.2L949.9 726.9L945.7 727.2L940.0 729.2L935.7 727.5L930.6 723.7L928.6 722.0L925.7 720.3L923.8 717.4L923.5 715.1L922.3 714.6L920.1 711.7L918.6 710.2L915.8 707.9L913.8 706.2L913.5 703.8L913.5 701.5L911.5 699.4L912.9 697.1L914.4 695.6L914.9 691.1L915.8 688.1L915.2 685.1L914.4 683.0L912.8 681.2L912.9 679.1L914.9 674.4L916.4 671.3L918.9 666.6L920.1 664.4L922.9 660.3L924.6 659.0L928.6 657.1L932.3 654.5L933.7 650.9L933.4 647.5L934.8 643.9L937.1 641.1L939.7 640.1L942.0 638.8L943.4 635.3ZM1101.5 776.1L1104.1 781.9L1104.9 786.3L1103.0 789.3L1102.1 793.8L1099.3 802.8L1096.4 810.5L1095.0 815.2L1089.9 817.1L1086.5 815.2L1084.5 807.4L1085.9 801.3L1087.9 796.8L1086.5 792.3L1087.9 788.4L1092.1 786.9L1096.4 784.3L1097.8 780.5L1100.1 777.5ZM1053.2 647.9L1053.7 652.2L1055.2 655.4L1056.9 658.0L1058.6 659.6L1060.0 656.4L1060.6 653.8L1060.9 658.7L1062.3 660.3L1065.1 665.1L1067.1 668.8L1069.4 671.3L1072.2 676.0L1072.8 679.1L1075.1 683.0L1077.9 686.6L1080.8 691.1L1082.8 694.1L1083.0 697.9L1084.2 702.9L1085.0 705.3L1089.3 705.0L1093.6 703.2L1097.8 701.5L1100.7 700.0L1106.4 697.9L1109.8 696.8L1113.5 693.5L1117.7 692.6L1121.4 689.9L1125.4 686.6L1125.7 682.7L1128.0 682.4L1131.4 676.0L1128.6 672.9L1123.4 670.7L1121.7 668.2L1121.4 664.1L1120.6 665.7L1118.3 667.3L1116.0 669.8L1110.6 670.7L1108.1 670.4L1108.1 668.2L1108.1 664.8L1105.8 666.6L1105.8 668.8L1104.1 665.7L1103.8 663.5L1102.1 660.9L1100.1 658.7L1097.8 655.4L1097.8 653.8L1099.3 652.2L1102.1 651.5L1104.4 652.8L1105.8 655.8L1107.8 659.0L1110.9 660.6L1114.9 663.2L1119.2 662.5L1121.4 661.6L1123.4 662.5L1124.3 666.0L1127.7 666.6L1133.4 667.3L1137.1 667.9L1141.9 667.6L1146.2 667.3L1150.5 667.0L1151.9 668.8L1153.3 671.7L1156.7 673.8L1160.4 674.8L1157.6 676.6L1160.4 680.6L1163.3 681.5L1166.1 680.0L1167.5 676.9L1168.1 680.6L1168.4 686.6L1169.8 692.6L1171.2 697.1L1173.2 701.5L1174.1 704.7L1176.9 709.6L1178.3 713.4L1180.3 717.7L1181.7 718.6L1183.7 716.3L1186.0 715.1L1186.9 712.2L1188.3 712.2L1188.3 708.8L1189.7 704.1L1188.9 697.9L1189.7 696.2L1191.7 696.2L1195.4 693.8L1198.2 690.5L1203.1 685.7L1207.3 683.0L1208.8 679.1L1212.2 678.4L1214.5 678.1L1218.7 677.5L1222.4 676.6L1223.8 681.2L1227.3 685.1L1229.5 688.1L1230.1 692.0L1229.2 695.6L1232.9 696.2L1235.8 694.1L1237.8 693.2L1239.2 695.6L1240.1 701.5L1241.5 705.9L1242.0 711.7L1240.9 716.0L1240.9 719.2L1243.8 721.2L1246.3 723.5L1246.9 726.3L1247.7 730.3L1249.4 733.4L1252.3 735.7L1255.4 737.7L1257.1 738.0L1257.7 734.6L1255.7 730.9L1255.4 728.0L1253.7 725.2L1252.0 724.0L1250.0 722.0L1247.2 720.9L1246.3 717.4L1245.2 714.6L1243.5 711.7L1244.3 708.8L1245.7 705.9L1245.7 703.2L1247.2 702.9L1248.6 705.3L1252.0 706.7L1254.0 708.2L1255.7 711.4L1258.5 712.0L1260.0 714.6L1259.4 717.1L1261.4 715.4L1264.2 713.7L1265.7 712.0L1268.5 710.8L1271.3 708.8L1272.2 705.3L1272.2 702.9L1271.3 698.5L1269.4 695.6L1266.5 692.6L1264.2 690.2L1262.2 687.2L1262.2 685.1L1264.2 683.0L1265.1 681.2L1267.1 680.0L1269.4 678.8L1272.8 679.4L1273.6 682.4L1275.0 682.7L1275.6 680.0L1278.5 679.1L1282.7 677.5L1285.6 676.6L1289.8 675.4L1293.2 673.5L1296.9 670.1L1301.2 666.6L1302.1 663.5L1304.6 658.7L1307.2 655.4L1308.3 652.2L1305.5 650.2L1308.0 648.9L1308.0 646.5L1305.5 643.9L1303.5 638.8L1300.6 635.3L1303.5 631.8L1309.7 628.3L1310.0 626.8L1306.9 626.1L1302.6 626.5L1299.8 627.2L1298.4 624.7L1296.4 620.3L1299.8 620.0L1302.6 617.4L1305.5 614.4L1308.3 615.1L1306.3 621.1L1307.2 621.4L1311.2 618.8L1314.9 617.7L1316.9 619.2L1317.7 622.9L1316.3 624.7L1319.7 625.8L1321.4 627.6L1320.8 630.0L1321.1 633.6L1320.6 636.7L1324.0 636.3L1328.2 635.0L1329.4 631.8L1329.4 628.3L1326.8 623.6L1324.0 619.2L1325.4 617.4L1330.2 613.6L1330.5 609.8L1333.1 608.3L1336.5 605.6L1340.2 606.7L1346.7 601.3L1349.6 596.0L1353.8 589.9L1359.5 581.4L1360.9 572.5L1363.5 566.6L1362.9 561.8L1358.1 558.5L1352.4 558.5L1351.0 559.9L1355.3 554.6L1346.7 554.6L1352.4 546.0L1359.5 538.1L1366.6 531.6L1368.6 530.5L1376.6 530.5L1385.1 528.8L1390.2 529.3L1396.5 531.6L1402.2 529.9L1407.9 517.1L1416.4 515.9L1417.3 521.3L1426.4 512.3L1429.8 512.3L1425.8 521.3L1423.5 524.2L1416.4 529.9L1415.8 532.7L1407.9 539.2L1407.3 543.4L1403.9 551.1L1403.6 558.5L1405.0 565.6L1407.0 573.0L1411.6 565.6L1412.4 563.3L1416.4 561.8L1416.4 556.1L1422.1 554.6L1421.5 551.1L1424.9 548.6L1425.8 543.4L1423.5 539.2L1425.8 535.4L1426.4 528.2L1430.6 527.1L1434.3 525.4L1440.6 524.2L1446.0 527.6L1450.5 521.3L1456.2 516.5L1466.2 512.3L1471.3 513.5L1471.9 509.2L1466.2 499.5L1473.3 496.2L1476.1 492.8L1484.7 499.5L1493.2 499.5L1502.6 489.3L1501.7 441.4L1046.6 441.4L1001.1 482.2L995.4 492.8L992.6 499.5L988.3 506.0L984.1 508.5L979.8 511.7L975.5 515.3L975.5 521.3L976.1 525.9L976.9 531.0L977.2 533.2L979.8 537.6L981.2 538.1L985.5 536.5L988.6 532.7L991.2 531.0L991.7 527.6L992.6 532.1L993.4 535.4L995.1 539.7L996.9 543.9L997.7 547.0L997.4 548.6L998.3 551.1L1001.7 551.6L1002.0 548.6L1006.2 548.1L1007.9 545.5L1008.8 539.7L1009.1 534.9L1011.9 533.2L1012.8 531.0L1015.1 527.1L1010.5 523.0L1010.2 517.1L1011.1 512.3L1012.5 509.2L1015.3 506.0L1021.0 499.5L1023.9 490.7L1032.4 496.2L1029.6 502.8L1023.9 507.9L1021.9 512.3L1022.5 518.3L1021.9 522.5L1023.9 524.8L1026.7 527.6L1032.4 525.9L1038.1 524.2L1042.4 524.2L1045.2 526.5L1047.2 527.6L1043.8 527.6L1040.9 529.3L1036.7 529.9L1031.6 530.5L1028.1 531.6L1028.1 534.3L1031.0 536.5L1030.4 539.2L1029.9 543.4L1027.3 542.9L1025.6 539.7L1022.7 540.8L1021.0 546.0L1021.3 550.1L1019.6 553.6L1017.9 554.6L1016.8 556.5L1014.5 556.5L1013.9 554.6L1009.7 555.1L1006.8 557.5L1002.0 559.0L999.7 556.5L996.0 557.5L992.6 558.5L992.0 557.0L989.7 556.1L988.3 553.6L989.7 551.1L990.6 547.0L992.3 546.0L990.6 543.4L991.5 539.7L988.3 542.4L984.6 543.4L984.3 546.0L984.3 551.1L986.0 554.1L985.8 557.0L986.9 559.0L985.5 560.4L984.1 560.4L981.2 560.4L981.2 561.8L978.4 561.4L975.5 561.8L975.0 563.7L974.1 566.6L972.7 568.4L971.3 570.7L968.4 572.1L965.9 573.0L965.9 576.1L964.1 577.4L961.6 579.2L959.9 580.1L957.9 579.6L957.6 578.3L955.9 578.3L956.7 582.7L954.2 583.1L951.3 582.2L947.9 583.5L948.8 586.1L951.6 586.9L954.2 588.6L955.0 589.0L955.6 590.7L957.9 593.2L958.2 596.0L957.9 599.7L957.0 604.0L956.2 604.4L952.8 604.4L948.5 604.4L944.2 603.6L940.0 603.2L938.5 603.2L935.7 605.2L934.8 606.4L936.0 609.1L936.3 610.2L936.6 612.9L936.0 616.6L934.6 619.6L934.3 622.1L935.7 623.2L936.3 624.7L936.3 626.5L935.7 628.3L938.5 627.9L940.3 627.6L942.8 628.6L943.4 630.0L945.4 631.8L946.2 631.1L948.8 629.3L952.8 629.3L955.3 629.0L956.7 627.2L959.0 626.1L959.9 623.6L961.9 621.8L960.4 619.2L962.7 615.1L963.9 614.4L967.6 612.1L970.4 610.2L970.4 608.3L969.8 605.6L971.3 604.8L974.1 604.4L976.7 604.8L978.9 605.6L980.4 605.2L982.1 603.2L984.6 602.0L986.6 600.5L989.2 601.7L990.6 604.0L991.2 606.4L993.2 608.3L994.9 609.4L996.3 611.0L998.3 612.5L1000.6 612.9L1002.0 614.4L1003.4 615.1L1004.0 616.6L1006.0 617.4L1006.8 620.0L1007.4 621.8L1006.2 624.0L1005.8 624.9L1007.1 625.0L1008.5 623.2L1010.2 621.1L1008.5 618.5L1009.4 615.9L1010.2 615.5L1012.5 617.4L1013.6 618.1L1013.9 616.6L1012.5 614.8L1009.4 613.2L1006.8 611.7L1007.4 610.6L1004.8 610.2L1003.1 609.1L1001.7 607.9L999.7 603.6L997.1 602.0L996.3 600.1L996.9 598.5L996.3 596.4L998.6 595.2L1000.6 595.6L1000.0 597.7L1000.8 598.9L1002.5 596.8L1004.0 600.1L1004.5 601.7L1007.9 604.0L1011.1 606.4L1012.8 607.5L1014.2 608.3L1015.6 609.8L1016.5 610.6L1016.8 612.5L1016.2 615.5L1018.2 618.1L1018.8 620.0L1020.5 621.4L1021.3 623.6L1023.0 624.0L1026.4 624.7L1024.7 624.3L1023.0 624.1L1021.9 625.4L1022.7 627.6L1023.0 629.0L1025.3 630.4L1025.6 629.0L1027.3 630.4L1026.7 627.6L1027.3 626.5L1026.7 625.0L1028.7 625.0L1029.6 625.9L1029.9 624.0L1028.1 622.5L1026.4 621.4L1026.4 619.6L1027.6 620.3L1025.9 617.4L1026.4 615.1L1028.1 617.7L1029.6 617.4L1030.7 617.0L1029.3 614.8L1030.7 614.0L1033.0 614.0L1035.0 614.4L1035.8 617.2L1035.5 619.2L1037.2 620.0L1037.8 622.9L1036.1 623.6L1038.7 625.8L1039.2 628.3L1041.8 629.0L1044.1 629.7L1045.5 631.1L1048.1 630.8L1048.6 628.6L1050.9 629.3L1054.6 631.8L1057.2 631.1L1059.7 629.0L1062.3 629.7L1064.3 629.7L1063.4 631.8L1063.1 633.6L1063.4 637.0L1062.3 639.1L1061.1 642.2L1060.3 645.2L1058.9 647.9L1056.6 648.5ZM945.1 576.5L947.1 576.5L949.4 575.2L951.3 575.2L952.8 573.9L955.6 574.3L958.2 573.4L961.3 573.4L964.1 573.0L965.3 571.6L965.3 570.7L962.7 570.2L964.1 568.9L966.3 565.6L965.0 563.7L962.2 563.7L962.2 560.9L961.6 560.4L960.7 558.0L959.6 556.1L957.6 554.6L957.0 552.6L956.7 550.6L955.6 549.6L954.2 548.6L952.2 548.6L953.9 547.0L953.3 546.0L955.3 542.9L956.2 540.8L952.8 539.7L949.4 540.8L950.2 538.1L952.6 534.6L947.1 534.9L946.2 538.1L944.8 540.8L945.4 543.4L943.7 545.0L945.4 547.0L944.9 552.1L947.1 549.6L947.6 551.1L947.1 553.6L946.8 555.1L948.8 555.1L951.3 554.1L951.3 556.1L953.1 558.0L952.8 561.4L951.3 561.8L948.2 561.8L947.9 564.2L949.6 565.6L948.5 567.5L946.2 568.4L949.9 569.8L952.2 570.5L953.6 570.2L952.2 571.6L949.4 571.6L948.5 573.4L947.1 575.2ZM943.1 567.0L943.9 561.8L944.2 558.5L945.7 556.5L943.9 552.6L940.3 551.6L937.7 552.6L937.7 556.1L932.9 557.0L932.3 560.9L935.7 562.3L933.1 565.2L931.7 567.5L932.3 569.3L933.4 570.5L937.7 568.9L941.4 567.5ZM996.6 625.0L999.4 624.0L1005.7 623.8L1004.3 626.5L1004.3 629.5L1001.7 628.3L996.9 626.1ZM984.6 613.6L987.5 612.7L988.9 615.5L988.6 620.3L986.6 621.4L985.2 621.1L985.2 616.2ZM985.8 608.3L988.0 606.0L988.3 608.7L987.5 612.1L986.0 611.0ZM1028.1 633.6L1031.0 633.9L1036.1 634.6L1035.8 635.3L1031.6 635.7L1028.1 634.6ZM1053.2 635.3L1055.2 634.3L1059.7 632.9L1058.0 635.5L1055.2 636.9L1053.2 636.0ZM968.1 618.8L970.1 617.7L971.0 618.5L970.1 620.0L968.7 619.6ZM1027.3 621.8L1030.1 624.0L1031.3 624.7L1029.9 622.5L1027.9 621.1ZM1013.1 542.9L1014.8 538.7L1015.9 538.7L1014.5 542.4ZM993.2 552.1L996.9 552.1L997.1 548.1L994.9 548.6L992.9 550.1ZM989.2 552.6L992.0 553.1L991.7 550.6L989.5 551.1ZM1023.3 536.5L1026.7 536.0L1026.7 534.3L1023.9 534.9ZM1188.3 714.0L1189.4 713.7L1192.3 717.4L1194.0 720.3L1193.7 723.2L1190.6 724.9L1188.9 724.0L1188.4 722.0L1188.3 718.3L1188.6 716.0ZM1270.5 686.0L1272.8 683.6L1275.6 683.3L1277.0 684.8L1275.6 687.2L1272.8 689.0L1270.5 688.1ZM1305.5 668.2L1306.9 667.3L1308.0 668.2L1306.9 672.9L1304.9 677.8L1303.2 675.1L1303.2 672.9L1304.9 669.8ZM1330.2 641.1L1333.6 639.1L1335.9 640.1L1336.5 643.2L1335.1 647.5L1333.1 648.9L1331.6 647.5L1331.9 643.9L1330.5 643.2ZM1338.2 639.1L1344.2 638.1L1344.4 639.4L1343.0 641.3L1340.5 640.8L1339.6 643.2L1337.9 641.5ZM1333.6 638.8L1335.9 636.3L1338.8 633.9L1339.6 633.6L1343.0 633.6L1346.2 632.9L1348.4 632.9L1348.4 630.8L1350.1 628.6L1350.4 627.2L1351.8 626.5L1351.6 629.0L1354.4 627.6L1356.7 625.0L1359.2 621.1L1358.7 617.7L1359.5 615.1L1360.5 612.7L1362.4 611.7L1363.5 612.1L1363.8 615.5L1365.2 618.8L1363.8 623.6L1362.2 625.4L1361.8 628.6L1361.2 630.8L1361.9 632.9L1360.4 635.0L1359.2 635.7L1359.0 633.2L1358.4 634.6L1357.0 635.0L1356.3 636.7L1355.3 635.0L1354.4 636.7L1351.0 636.7L1350.7 635.3L1349.6 636.7L1350.7 637.7L1349.0 639.1L1347.4 640.6L1345.6 639.1L1345.9 637.7L1346.4 636.5L1344.7 636.3L1342.2 636.7L1339.6 637.7L1337.9 637.6L1336.8 639.1L1334.8 638.8ZM1359.8 611.9L1359.5 609.1L1359.0 607.5L1360.7 604.6L1363.2 604.8L1364.4 600.5L1364.9 596.0L1367.8 599.3L1371.8 602.0L1374.6 600.7L1376.0 604.6L1372.0 606.2L1368.8 610.0L1364.9 607.7L1362.4 608.7L1360.7 607.9L1361.5 609.4L1362.9 610.6L1361.5 611.0ZM1367.2 556.5L1368.9 564.2L1369.5 572.5L1369.5 574.8L1372.9 582.7L1368.1 580.5L1366.6 587.8L1368.1 589.9L1369.5 592.4L1366.6 591.5L1365.4 594.4L1364.6 589.9L1365.2 583.5L1365.5 577.0L1364.6 570.2L1364.4 565.6L1365.8 560.9ZM1304.9 687.8L1308.9 688.1L1309.2 692.6L1306.9 696.2L1307.5 700.9L1309.7 700.9L1312.0 701.8L1314.3 705.6L1312.0 704.4L1309.7 702.9L1307.5 701.8L1304.3 702.1L1305.2 699.7L1302.9 699.1L1302.1 694.7L1303.8 693.8L1303.5 691.1ZM1318.3 713.7L1320.8 718.9L1321.4 720.9L1320.3 723.7L1318.6 721.6L1318.0 725.7L1314.0 723.5L1314.6 720.6L1312.3 720.0L1308.5 722.0L1309.2 718.9L1312.3 716.9L1313.4 718.6L1316.0 717.4L1317.4 716.0ZM1314.9 705.9L1317.7 705.9L1318.8 709.6L1316.9 710.2L1315.1 712.5L1316.6 713.1L1317.4 712.2L1316.0 709.3ZM1308.3 707.6L1311.2 708.8L1311.5 710.2L1309.7 711.4L1308.3 711.7ZM1311.2 710.5L1312.6 710.8L1312.0 714.6L1311.2 715.7L1309.7 713.7ZM1312.3 714.6L1314.0 709.6L1313.7 712.5ZM1303.8 703.2L1306.0 703.2L1306.9 705.6L1305.8 706.4L1304.9 705.3ZM1294.7 717.7L1298.4 715.1L1301.2 711.4L1301.8 709.3L1300.4 711.7L1296.9 715.4L1295.0 716.9ZM1313.4 713.4L1315.4 712.8L1315.4 714.0L1313.7 714.3ZM1273.1 735.9L1275.0 736.9L1277.6 734.9L1282.7 732.6L1285.6 728.9L1288.4 727.5L1291.3 724.6L1293.5 721.7L1296.1 723.5L1297.2 725.0L1300.4 726.9L1297.2 729.5L1295.8 732.3L1296.7 736.0L1299.8 738.9L1296.7 739.4L1295.0 743.4L1293.5 745.4L1292.4 748.8L1291.3 751.9L1287.3 753.4L1287.0 751.4L1282.7 750.8L1279.0 751.7L1274.8 750.0L1274.2 746.3L1271.6 742.8L1271.3 740.8L1271.1 738.3ZM1232.4 725.9L1238.6 726.9L1242.0 730.9L1246.9 735.4L1249.7 736.9L1254.3 740.3L1256.6 744.5L1258.5 746.8L1260.3 748.5L1263.1 750.8L1262.5 754.5L1262.2 758.4L1260.8 757.4L1258.8 758.5L1255.4 755.7L1252.1 752.7L1248.3 748.5L1246.7 744.4L1243.2 740.8L1242.3 736.9L1238.9 734.6L1234.9 730.3L1232.7 727.5ZM1260.8 761.1L1263.1 758.5L1265.1 759.1L1270.2 760.8L1275.3 761.5L1276.7 759.9L1281.9 762.2L1286.7 763.7L1287.0 766.5L1282.7 765.4L1279.0 765.4L1274.2 764.2L1270.2 763.7L1267.1 763.7L1263.9 762.7ZM1260.5 746.5L1263.4 746.3L1264.8 750.2L1262.5 748.8ZM1287.0 765.1L1290.1 765.1L1289.3 766.8ZM1291.3 765.7L1293.2 765.7L1292.4 767.1ZM1293.5 766.0L1296.9 765.1L1299.8 765.4L1299.8 766.5L1295.5 767.4ZM1302.3 765.7L1306.9 766.0L1310.9 765.1L1310.6 766.3L1305.5 767.1L1302.3 766.8ZM1299.8 768.8L1303.2 768.6L1304.9 770.3L1302.6 771.2L1299.8 769.7ZM1312.6 771.2L1315.4 768.0L1318.3 766.3L1323.4 765.7L1321.1 767.4L1316.9 769.7L1314.0 771.2ZM1301.2 757.7L1301.2 751.7L1299.5 749.4L1300.9 744.8L1302.1 741.7L1302.1 739.7L1305.2 738.0L1311.2 739.1L1316.3 737.4L1317.4 737.1L1314.9 740.6L1311.3 740.3L1305.5 740.4L1302.9 742.0L1303.5 744.3L1304.8 745.7L1307.2 744.1L1312.3 744.4L1312.0 744.8L1307.8 747.1L1306.3 747.4L1308.9 751.1L1310.0 752.9L1310.9 754.5L1308.3 755.4L1306.9 754.8L1307.2 753.4L1305.5 751.7L1303.8 749.4L1303.8 753.1L1303.6 754.5L1303.9 757.7ZM1324.0 735.4L1325.4 737.4L1327.4 737.4L1325.4 739.4L1327.4 740.8L1325.1 741.1L1326.0 744.0L1324.5 742.6L1323.7 738.9ZM1325.4 750.8L1329.7 749.7L1333.4 751.7L1329.7 751.4ZM1319.7 750.8L1322.5 750.5L1323.1 751.9L1320.3 752.5ZM1334.5 744.0L1337.9 742.8L1342.7 744.1L1343.3 747.4L1345.3 751.1L1349.0 748.0L1353.5 746.0L1358.1 748.0L1361.5 748.8L1366.6 750.8L1370.9 752.2L1376.0 756.5L1379.1 758.5L1381.9 760.8L1379.7 760.9L1382.8 766.3L1386.0 767.5L1390.5 771.0L1388.0 772.0L1382.0 770.6L1379.7 768.8L1376.6 764.8L1373.2 763.7L1370.6 764.0L1369.2 765.7L1366.9 768.3L1362.4 767.7L1359.2 764.8L1353.8 765.7L1353.0 765.7L1356.4 762.2L1355.8 760.5L1354.1 757.4L1349.0 754.8L1345.9 754.4L1341.3 752.5L1339.3 753.4L1339.0 750.0L1341.9 748.5L1337.6 748.2L1333.6 745.5ZM1383.1 757.7L1388.0 757.1L1392.2 753.9L1394.5 753.9L1393.7 756.5L1389.4 759.4L1385.1 759.4ZM1390.2 749.1L1393.7 751.1L1396.5 754.5L1395.6 754.8L1392.2 751.1ZM1401.1 757.1L1404.5 760.2L1403.3 761.4L1401.3 758.8ZM1366.6 772.3L1369.5 777.5L1370.3 783.4L1374.6 786.3L1376.0 790.5L1377.2 795.3L1378.9 797.7L1384.3 800.7L1385.7 803.4L1390.2 809.0L1391.7 811.7L1396.2 816.1L1396.8 820.9L1398.1 825.4L1397.4 831.2L1396.5 836.2L1395.1 839.2L1393.1 840.9L1391.7 844.0L1390.2 848.1L1388.3 853.0L1387.8 856.2L1387.9 856.9L1382.3 858.4L1379.4 860.2L1377.4 862.7L1373.7 860.2L1372.9 859.1L1369.5 861.6L1364.1 860.0L1360.5 858.7L1358.8 855.8L1358.4 851.2L1354.1 850.4L1355.3 847.7L1354.1 845.3L1351.0 848.8L1352.3 845.0L1353.3 839.5L1351.0 843.6L1347.9 847.2L1345.6 846.7L1343.0 840.9L1341.6 838.4L1336.8 837.7L1334.2 836.2L1328.2 836.7L1323.4 838.5L1318.3 840.2L1314.0 842.6L1312.9 844.3L1308.0 844.3L1302.6 844.5L1300.9 846.0L1296.7 848.3L1291.3 847.6L1288.7 845.8L1288.4 843.1L1290.3 842.3L1290.5 837.9L1288.7 832.9L1287.3 827.3L1285.9 823.1L1283.6 819.0L1285.9 819.6L1284.6 814.9L1284.9 809.3L1286.0 805.3L1286.4 807.4L1288.1 805.0L1293.5 801.8L1298.7 800.7L1302.6 799.5L1307.2 795.9L1308.9 793.6L1308.9 791.4L1310.9 789.0L1312.9 792.0L1312.9 788.4L1315.1 786.3L1317.7 783.4L1320.0 781.6L1322.3 781.2L1325.7 784.3L1326.0 786.0L1329.7 784.6L1329.4 782.8L1331.4 779.9L1333.5 777.4L1338.5 776.4L1336.2 774.1L1338.5 773.8L1341.0 775.5L1345.9 776.7L1349.9 776.1L1350.8 777.0L1349.9 779.9L1347.9 782.5L1346.6 784.9L1350.1 787.5L1353.0 789.0L1357.0 791.1L1358.4 792.3L1361.9 792.3L1363.5 788.1L1364.1 784.6L1363.8 780.5L1364.8 777.8L1365.6 773.2ZM1452.5 846.0L1453.7 847.7L1456.5 848.8L1457.9 851.2L1458.5 853.0L1458.8 854.8L1460.5 855.8L1460.1 853.4L1461.6 855.1L1462.5 857.6L1465.3 858.7L1467.6 857.3L1469.2 857.6L1468.5 860.5L1467.3 863.1L1464.8 863.4L1464.8 865.3L1462.8 869.0L1459.9 872.0L1458.2 870.9L1459.4 867.9L1459.6 866.0L1457.7 864.9L1455.7 863.4L1457.9 861.6L1458.2 858.7L1458.5 856.6L1457.7 854.8L1456.8 852.6L1454.2 849.5L1453.1 847.1ZM1331.6 774.6L1335.3 774.3L1333.9 775.8L1332.2 775.5ZM1349.9 850.9L1352.7 850.2L1354.1 851.2L1351.0 851.9ZM1349.3 781.3L1350.7 781.6L1350.1 782.8ZM1427.8 800.1L1432.1 802.8L1436.3 806.8L1434.9 807.1L1430.6 804.3L1427.8 801.3ZM517.5 684.8a1.5 1.20 0 1 0 3.0 0a1.5 1.20 0 1 0 -3.0 0ZM515.8 681.2a0.9 0.72 0 1 0 1.8 0a0.9 0.72 0 1 0 -1.8 0ZM511.4 679.1a0.8 0.64 0 1 0 1.6 0a0.8 0.64 0 1 0 -1.6 0ZM506.9 677.4a0.75 0.60 0 1 0 1.5 0a0.75 0.60 0 1 0 -1.5 0ZM486.9 559.9a0.75 0.60 0 1 0 1.5 0a0.75 0.60 0 1 0 -1.5 0ZM481.9 561.8a0.65 0.52 0 1 0 1.3 0a0.65 0.52 0 1 0 -1.3 0ZM475.9 564.7a0.4 0.32 0 1 0 0.8 0a0.4 0.32 0 1 0 -0.8 0ZM470.2 566.6a0.4 0.32 0 1 0 0.8 0a0.4 0.32 0 1 0 -0.8 0ZM464.9 567.0a0.6 0.48 0 1 0 1.2 0a0.6 0.48 0 1 0 -1.2 0ZM458.1 568.9a0.6 0.48 0 1 0 1.2 0a0.6 0.48 0 1 0 -1.2 0ZM454.6 569.3a0.4 0.32 0 1 0 0.8 0a0.4 0.32 0 1 0 -0.8 0ZM1470.0 570.2a0.5 0.40 0 1 0 1.0 0a0.5 0.40 0 1 0 -1.0 0ZM1465.8 567.9a0.4 0.32 0 1 0 0.8 0a0.4 0.32 0 1 0 -0.8 0ZM1452.8 563.7a0.6 0.48 0 1 0 1.2 0a0.6 0.48 0 1 0 -1.2 0ZM1432.7 552.6a0.75 0.60 0 1 0 1.5 0a0.75 0.60 0 1 0 -1.5 0ZM1437.2 554.6a0.5 0.40 0 1 0 1.0 0a0.5 0.40 0 1 0 -1.0 0ZM785.9 695.0a0.5 0.40 0 1 0 1.0 0a0.5 0.40 0 1 0 -1.0 0ZM787.3 699.7a0.5 0.40 0 1 0 1.0 0a0.5 0.40 0 1 0 -1.0 0ZM786.5 697.4a0.4 0.32 0 1 0 0.8 0a0.4 0.32 0 1 0 -0.8 0ZM787.4 701.8a0.35 0.28 0 1 0 0.7 0a0.35 0.28 0 1 0 -0.7 0ZM791.4 703.8a0.35 0.28 0 1 0 0.7 0a0.35 0.28 0 1 0 -0.7 0ZM785.5 707.0a0.3 0.24 0 1 0 0.6 0a0.3 0.24 0 1 0 -0.6 0ZM777.0 688.7a0.25 0.20 0 1 0 0.5 0a0.25 0.20 0 1 0 -0.5 0ZM782.4 691.7a0.25 0.20 0 1 0 0.5 0a0.25 0.20 0 1 0 -0.5 0ZM765.0 706.7a0.35 0.28 0 1 0 0.7 0a0.35 0.28 0 1 0 -0.7 0ZM761.9 705.9a0.25 0.20 0 1 0 0.5 0a0.25 0.20 0 1 0 -0.5 0ZM741.2 668.2a0.25 0.20 0 1 0 0.5 0a0.25 0.20 0 1 0 -0.5 0ZM744.9 669.8a0.25 0.20 0 1 0 0.5 0a0.25 0.20 0 1 0 -0.5 0ZM751.9 680.6a0.3 0.24 0 1 0 0.6 0a0.3 0.24 0 1 0 -0.6 0ZM737.6 663.2a0.4 0.32 0 1 0 0.8 0a0.4 0.32 0 1 0 -0.8 0ZM741.4 663.5a0.35 0.28 0 1 0 0.7 0a0.35 0.28 0 1 0 -0.7 0ZM725.2 678.8a0.6 0.48 0 1 0 1.2 0a0.6 0.48 0 1 0 -1.2 0ZM729.8 685.7a0.25 0.20 0 1 0 0.5 0a0.25 0.20 0 1 0 -0.5 0ZM777.0 644.5a0.25 0.20 0 1 0 0.5 0a0.25 0.20 0 1 0 -0.5 0ZM703.2 743.1a0.65 0.52 0 1 0 1.3 0a0.65 0.52 0 1 0 -1.3 0ZM700.9 743.4a0.75 0.60 0 1 0 1.5 0a0.75 0.60 0 1 0 -1.5 0ZM706.4 744.0a0.35 0.28 0 1 0 0.7 0a0.35 0.28 0 1 0 -0.7 0ZM1376.1 600.1a0.5 0.40 0 1 0 1.0 0a0.5 0.40 0 1 0 -1.0 0ZM1381.1 597.3a0.65 0.52 0 1 0 1.3 0a0.65 0.52 0 1 0 -1.3 0ZM1386.9 594.0a0.45 0.36 0 1 0 0.9 0a0.45 0.36 0 1 0 -0.9 0ZM1393.3 589.9a0.35 0.28 0 1 0 0.7 0a0.35 0.28 0 1 0 -0.7 0ZM1396.8 583.5a0.3 0.24 0 1 0 0.6 0a0.3 0.24 0 1 0 -0.6 0ZM1401.2 579.2a0.4 0.32 0 1 0 0.8 0a0.4 0.32 0 1 0 -0.8 0ZM1404.5 575.7a0.5 0.40 0 1 0 1.0 0a0.5 0.40 0 1 0 -1.0 0ZM1324.9 663.5a0.45 0.36 0 1 0 0.9 0a0.45 0.36 0 1 0 -0.9 0ZM1329.3 657.7a0.35 0.28 0 1 0 0.7 0a0.35 0.28 0 1 0 -0.7 0ZM1332.1 650.9a0.4 0.32 0 1 0 0.8 0a0.4 0.32 0 1 0 -0.8 0ZM1314.3 670.1a0.3 0.24 0 1 0 0.6 0a0.3 0.24 0 1 0 -0.6 0ZM1320.6 640.8a0.5 0.40 0 1 0 1.0 0a0.5 0.40 0 1 0 -1.0 0ZM1328.7 637.4a0.35 0.28 0 1 0 0.7 0a0.35 0.28 0 1 0 -0.7 0ZM1354.6 624.7a0.35 0.28 0 1 0 0.7 0a0.35 0.28 0 1 0 -0.7 0ZM1415.2 765.1a0.6 0.48 0 1 0 1.2 0a0.6 0.48 0 1 0 -1.2 0ZM1416.5 768.8a0.75 0.60 0 1 0 1.5 0a0.75 0.60 0 1 0 -1.5 0ZM1418.8 766.8a0.5 0.40 0 1 0 1.0 0a0.5 0.40 0 1 0 -1.0 0ZM1421.0 771.4a0.55 0.44 0 1 0 1.1 0a0.55 0.44 0 1 0 -1.1 0ZM1408.2 762.2a0.5 0.40 0 1 0 1.0 0a0.5 0.40 0 1 0 -1.0 0ZM1411.2 764.5a0.35 0.28 0 1 0 0.7 0a0.35 0.28 0 1 0 -0.7 0ZM1435.2 785.7a0.6 0.48 0 1 0 1.2 0a0.6 0.48 0 1 0 -1.2 0ZM1437.0 788.4a0.5 0.40 0 1 0 1.0 0a0.5 0.40 0 1 0 -1.0 0ZM1439.6 792.9a0.4 0.32 0 1 0 0.8 0a0.4 0.32 0 1 0 -0.8 0ZM1442.6 798.3a0.3 0.24 0 1 0 0.6 0a0.3 0.24 0 1 0 -0.6 0ZM1466.9 793.2a0.75 0.60 0 1 0 1.5 0a0.75 0.60 0 1 0 -1.5 0ZM1470.4 789.6a0.6 0.48 0 1 0 1.2 0a0.6 0.48 0 1 0 -1.2 0ZM470.1 780.8a0.5 0.40 0 1 0 1.0 0a0.5 0.40 0 1 0 -1.0 0ZM472.2 781.6a0.4 0.32 0 1 0 0.8 0a0.4 0.32 0 1 0 -0.8 0ZM462.7 803.4a0.3 0.24 0 1 0 0.6 0a0.3 0.24 0 1 0 -0.6 0ZM535.7 792.6a0.4 0.32 0 1 0 0.8 0a0.4 0.32 0 1 0 -0.8 0ZM1438.7 828.0a0.2 0.16 0 1 0 0.4 0a0.2 0.16 0 1 0 -0.4 0ZM1413.7 836.2a0.15 0.12 0 1 0 0.3 0a0.15 0.12 0 1 0 -0.3 0ZM1372.9 702.9a0.3 0.24 0 1 0 0.6 0a0.3 0.24 0 1 0 -0.6 0ZM1375.5 697.9a0.2 0.16 0 1 0 0.4 0a0.2 0.16 0 1 0 -0.4 0ZM1343.9 720.3a0.3 0.24 0 1 0 0.6 0a0.3 0.24 0 1 0 -0.6 0ZM1411.0 722.0a0.25 0.20 0 1 0 0.5 0a0.25 0.20 0 1 0 -0.5 0ZM1392.9 720.6a0.2 0.16 0 1 0 0.4 0a0.2 0.16 0 1 0 -0.4 0ZM1379.1 747.4a0.35 0.28 0 1 0 0.7 0a0.35 0.28 0 1 0 -0.7 0ZM1170.2 729.7a0.2 0.16 0 1 0 0.4 0a0.2 0.16 0 1 0 -0.4 0ZM1167.1 762.5a0.15 0.12 0 1 0 0.3 0a0.15 0.12 0 1 0 -0.3 0ZM1118.7 803.1a0.45 0.36 0 1 0 0.9 0a0.45 0.36 0 1 0 -0.9 0ZM1124.7 800.4a0.4 0.32 0 1 0 0.8 0a0.4 0.32 0 1 0 -0.8 0ZM1084.1 775.2a0.35 0.28 0 1 0 0.7 0a0.35 0.28 0 1 0 -0.7 0ZM1089.6 778.4a0.25 0.20 0 1 0 0.5 0a0.25 0.20 0 1 0 -0.5 0ZM1119.0 754.8a0.2 0.16 0 1 0 0.4 0a0.2 0.16 0 1 0 -0.4 0ZM1113.7 705.9a0.6 0.48 0 1 0 1.2 0a0.6 0.48 0 1 0 -1.2 0ZM888.4 625.4a0.35 0.28 0 1 0 0.7 0a0.35 0.28 0 1 0 -0.7 0ZM883.6 622.1a0.3 0.24 0 1 0 0.6 0a0.3 0.24 0 1 0 -0.6 0ZM880.2 622.9a0.3 0.24 0 1 0 0.6 0a0.3 0.24 0 1 0 -0.6 0ZM912.6 643.2a0.35 0.28 0 1 0 0.7 0a0.35 0.28 0 1 0 -0.7 0ZM913.9 657.7a0.5 0.40 0 1 0 1.0 0a0.5 0.40 0 1 0 -1.0 0ZM916.5 658.7a0.4 0.32 0 1 0 0.8 0a0.4 0.32 0 1 0 -0.8 0ZM921.0 657.4a0.45 0.36 0 1 0 0.9 0a0.45 0.36 0 1 0 -0.9 0ZM922.3 655.4a0.35 0.28 0 1 0 0.7 0a0.35 0.28 0 1 0 -0.7 0ZM910.1 656.4a0.25 0.20 0 1 0 0.5 0a0.25 0.20 0 1 0 -0.5 0ZM893.8 698.5a0.35 0.28 0 1 0 0.7 0a0.35 0.28 0 1 0 -0.7 0ZM891.9 693.8a0.25 0.20 0 1 0 0.5 0a0.25 0.20 0 1 0 -0.5 0ZM889.7 692.6a0.25 0.20 0 1 0 0.5 0a0.25 0.20 0 1 0 -0.5 0ZM895.7 695.3a0.2 0.16 0 1 0 0.4 0a0.2 0.16 0 1 0 -0.4 0ZM979.8 740.8a0.3 0.24 0 1 0 0.6 0a0.3 0.24 0 1 0 -0.6 0ZM982.1 737.1a0.2 0.16 0 1 0 0.4 0a0.2 0.16 0 1 0 -0.4 0ZM985.7 731.7a0.35 0.28 0 1 0 0.7 0a0.35 0.28 0 1 0 -0.7 0ZM1224.8 706.7a0.5 0.40 0 1 0 1.0 0a0.5 0.40 0 1 0 -1.0 0ZM1224.6 708.8a0.35 0.28 0 1 0 0.7 0a0.35 0.28 0 1 0 -0.7 0ZM1227.8 721.2a0.3 0.24 0 1 0 0.6 0a0.3 0.24 0 1 0 -0.6 0ZM1236.7 738.3a0.5 0.40 0 1 0 1.0 0a0.5 0.40 0 1 0 -1.0 0ZM1240.9 746.0a0.55 0.44 0 1 0 1.1 0a0.55 0.44 0 1 0 -1.1 0ZM1244.5 748.8a0.35 0.28 0 1 0 0.7 0a0.35 0.28 0 1 0 -0.7 0ZM1246.3 750.2a0.3 0.24 0 1 0 0.6 0a0.3 0.24 0 1 0 -0.6 0ZM1233.7 734.3a0.35 0.28 0 1 0 0.7 0a0.35 0.28 0 1 0 -0.7 0ZM1264.8 750.0a0.3 0.24 0 1 0 0.6 0a0.3 0.24 0 1 0 -0.6 0ZM1268.0 750.0a0.5 0.40 0 1 0 1.0 0a0.5 0.40 0 1 0 -1.0 0ZM1258.2 739.1a0.3 0.24 0 1 0 0.6 0a0.3 0.24 0 1 0 -0.6 0ZM1268.8 730.6a0.3 0.24 0 1 0 0.6 0a0.3 0.24 0 1 0 -0.6 0ZM1305.1 724.6a0.35 0.28 0 1 0 0.7 0a0.35 0.28 0 1 0 -0.7 0ZM1302.4 726.6a0.25 0.20 0 1 0 0.5 0a0.25 0.20 0 1 0 -0.5 0ZM1321.2 730.3a0.25 0.20 0 1 0 0.5 0a0.25 0.20 0 1 0 -0.5 0ZM1318.1 731.7a0.2 0.16 0 1 0 0.4 0a0.2 0.16 0 1 0 -0.4 0ZM1332.9 742.6a0.45 0.36 0 1 0 0.9 0a0.45 0.36 0 1 0 -0.9 0ZM1331.6 747.1a0.35 0.28 0 1 0 0.7 0a0.35 0.28 0 1 0 -0.7 0ZM1335.1 763.4a0.5 0.40 0 1 0 1.0 0a0.5 0.40 0 1 0 -1.0 0ZM1343.3 758.8a0.55 0.44 0 1 0 1.1 0a0.55 0.44 0 1 0 -1.1 0ZM1338.5 757.9a0.3 0.24 0 1 0 0.6 0a0.3 0.24 0 1 0 -0.6 0ZM1330.5 764.5a0.25 0.20 0 1 0 0.5 0a0.25 0.20 0 1 0 -0.5 0ZM1320.7 763.7a0.4 0.32 0 1 0 0.8 0a0.4 0.32 0 1 0 -0.8 0ZM1313.7 765.4a0.35 0.28 0 1 0 0.7 0a0.35 0.28 0 1 0 -0.7 0ZM1310.7 755.9a0.45 0.36 0 1 0 0.9 0a0.45 0.36 0 1 0 -0.9 0ZM1309.7 756.8a0.35 0.28 0 1 0 0.7 0a0.35 0.28 0 1 0 -0.7 0ZM1311.3 746.5a0.4 0.32 0 1 0 0.8 0a0.4 0.32 0 1 0 -0.8 0ZM1316.0 746.8a0.3 0.24 0 1 0 0.6 0a0.3 0.24 0 1 0 -0.6 0ZM1319.1 747.1a0.35 0.28 0 1 0 0.7 0a0.35 0.28 0 1 0 -0.7 0ZM1323.2 746.0a0.45 0.36 0 1 0 0.9 0a0.45 0.36 0 1 0 -0.9 0ZM1323.7 743.7a0.25 0.20 0 1 0 0.5 0a0.25 0.20 0 1 0 -0.5 0ZM1326.3 734.9a0.25 0.20 0 1 0 0.5 0a0.25 0.20 0 1 0 -0.5 0ZM941.0 514.7a0.35 0.28 0 1 0 0.7 0a0.35 0.28 0 1 0 -0.7 0ZM957.2 525.4a0.4 0.32 0 1 0 0.8 0a0.4 0.32 0 1 0 -0.8 0ZM952.5 532.7a0.3 0.24 0 1 0 0.6 0a0.3 0.24 0 1 0 -0.6 0ZM941.5 537.0a0.45 0.36 0 1 0 0.9 0a0.45 0.36 0 1 0 -0.9 0ZM943.3 541.8a0.4 0.32 0 1 0 0.8 0a0.4 0.32 0 1 0 -0.8 0ZM940.3 541.8a0.25 0.20 0 1 0 0.5 0a0.25 0.20 0 1 0 -0.5 0ZM944.0 546.5a0.25 0.20 0 1 0 0.5 0a0.25 0.20 0 1 0 -0.5 0ZM943.5 550.1a0.2 0.16 0 1 0 0.4 0a0.2 0.16 0 1 0 -0.4 0ZM948.3 557.5a0.2 0.16 0 1 0 0.4 0a0.2 0.16 0 1 0 -0.4 0ZM1003.8 553.1a0.2 0.16 0 1 0 0.4 0a0.2 0.16 0 1 0 -0.4 0ZM1008.6 544.5a0.25 0.20 0 1 0 0.5 0a0.25 0.20 0 1 0 -0.5 0ZM1017.9 525.9a0.3 0.24 0 1 0 0.6 0a0.3 0.24 0 1 0 -0.6 0ZM1025.5 533.2a0.35 0.28 0 1 0 0.7 0a0.35 0.28 0 1 0 -0.7 0ZM993.8 554.6a0.25 0.20 0 1 0 0.5 0a0.25 0.20 0 1 0 -0.5 0ZM965.1 621.4a0.2 0.16 0 1 0 0.4 0a0.2 0.16 0 1 0 -0.4 0ZM972.4 617.7a0.25 0.20 0 1 0 0.5 0a0.25 0.20 0 1 0 -0.5 0ZM1002.1 632.2a0.15 0.12 0 1 0 0.3 0a0.15 0.12 0 1 0 -0.3 0ZM990.4 606.7a0.15 0.12 0 1 0 0.3 0a0.15 0.12 0 1 0 -0.3 0ZM1017.7 618.8a0.2 0.16 0 1 0 0.4 0a0.2 0.16 0 1 0 -0.4 0ZM1019.6 624.0a0.25 0.20 0 1 0 0.5 0a0.25 0.20 0 1 0 -0.5 0ZM1020.3 625.4a0.2 0.16 0 1 0 0.4 0a0.2 0.16 0 1 0 -0.4 0ZM1032.2 628.3a0.25 0.20 0 1 0 0.5 0a0.25 0.20 0 1 0 -0.5 0ZM1033.4 630.4a0.15 0.12 0 1 0 0.3 0a0.15 0.12 0 1 0 -0.3 0ZM1035.5 620.3a0.35 0.28 0 1 0 0.7 0a0.35 0.28 0 1 0 -0.7 0ZM1035.0 623.2a0.25 0.20 0 1 0 0.5 0a0.25 0.20 0 1 0 -0.5 0ZM1037.3 625.8a0.2 0.16 0 1 0 0.4 0a0.2 0.16 0 1 0 -0.4 0ZM1040.6 631.1a0.35 0.28 0 1 0 0.7 0a0.35 0.28 0 1 0 -0.7 0ZM1032.8 617.4a0.15 0.12 0 1 0 0.3 0a0.15 0.12 0 1 0 -0.3 0ZM1031.1 614.8a0.15 0.12 0 1 0 0.3 0a0.15 0.12 0 1 0 -0.3 0ZM1038.5 633.2a0.15 0.12 0 1 0 0.3 0a0.15 0.12 0 1 0 -0.3 0ZM1031.9 625.4a0.2 0.16 0 1 0 0.4 0a0.2 0.16 0 1 0 -0.4 0ZM1105.0 665.1a0.2 0.16 0 1 0 0.4 0a0.2 0.16 0 1 0 -0.4 0ZM1120.3 662.5a0.25 0.20 0 1 0 0.5 0a0.25 0.20 0 1 0 -0.5 0ZM1128.4 682.4a0.2 0.16 0 1 0 0.4 0a0.2 0.16 0 1 0 -0.4 0ZM1080.6 693.5a0.2 0.16 0 1 0 0.4 0a0.2 0.16 0 1 0 -0.4 0ZM1075.1 696.5a0.25 0.20 0 1 0 0.5 0a0.25 0.20 0 1 0 -0.5 0ZM1308.6 652.2a0.25 0.20 0 1 0 0.5 0a0.25 0.20 0 1 0 -0.5 0ZM1306.9 646.9a0.25 0.20 0 1 0 0.5 0a0.25 0.20 0 1 0 -0.5 0ZM1301.3 672.6a0.15 0.12 0 1 0 0.3 0a0.15 0.12 0 1 0 -0.3 0ZM1363.1 597.3a0.15 0.12 0 1 0 0.3 0a0.15 0.12 0 1 0 -0.3 0ZM1357.7 636.3a0.15 0.12 0 1 0 0.3 0a0.15 0.12 0 1 0 -0.3 0ZM1365.7 661.9a0.1 0.08 0 1 0 0.2 0a0.1 0.08 0 1 0 -0.2 0Z" fill="#f2efe9" stroke="#f2efe9" stroke-width="0.6" stroke-linejoin="round"/><path d="M757.9 710.8L759.3 713.1L758.8 715.4L756.5 714.6L756.8 711.7ZM1037.5 615.5L1040.9 615.9L1043.8 615.9L1046.1 614.8L1043.8 613.6L1039.5 613.6L1038.1 614.8ZM1043.8 612.9L1040.9 611.0L1039.5 607.9L1040.7 605.2L1042.7 604.0L1042.9 601.3L1045.8 597.3L1047.2 594.8L1048.6 591.9L1050.9 591.5L1052.3 591.9L1053.7 593.6L1056.0 593.6L1053.7 596.6L1056.3 599.9L1058.6 600.5L1062.0 598.1L1065.4 597.7L1065.1 596.4L1062.3 596.8L1060.9 595.2L1060.3 593.6L1061.7 592.4L1066.0 591.1L1068.3 589.5L1070.8 589.5L1073.1 589.5L1070.8 591.1L1069.4 593.6L1068.8 595.6L1067.7 596.8L1066.0 597.7L1067.4 598.9L1068.8 599.3L1072.2 602.0L1074.2 603.6L1077.9 606.0L1079.6 609.8L1079.6 611.4L1077.9 612.9L1074.2 613.6L1070.5 614.0L1068.0 613.2L1064.6 612.5L1062.3 611.0L1061.4 609.6L1058.0 609.8L1056.0 609.8L1053.2 610.6L1051.8 611.7L1050.6 612.5L1047.5 612.9ZM1100.7 591.9L1096.4 595.2L1095.6 598.9L1096.4 604.0L1096.4 606.0L1098.7 609.8L1101.5 613.6L1104.7 615.9L1102.1 617.4L1101.8 620.0L1100.4 623.2L1102.1 626.5L1104.9 628.3L1107.8 629.3L1110.6 629.3L1114.9 628.6L1114.6 624.7L1114.3 620.3L1112.1 619.2L1111.8 617.4L1113.5 616.2L1116.9 612.9L1116.3 609.8L1112.1 610.6L1111.2 612.9L1110.3 609.8L1110.6 606.7L1107.2 605.2L1106.4 601.3L1104.1 600.1L1106.4 598.1L1110.6 596.4L1112.6 593.2L1112.1 590.3L1107.8 589.5L1103.5 590.7ZM699.6 591.1L703.9 590.3L708.1 586.1L709.6 583.5L711.0 581.8L715.3 582.7L719.5 586.1L720.4 590.7L718.1 591.1L713.8 591.9L709.6 590.3L711.6 588.2L708.1 590.3L705.3 591.5ZM712.1 611.0L715.3 609.8L716.1 604.0L716.7 598.9L718.7 595.6L719.5 594.4L715.3 594.8L712.4 598.1L711.0 600.1L712.4 602.0L711.6 606.0ZM720.4 594.4L723.8 593.6L728.1 594.0L730.9 594.8L733.7 598.1L733.2 600.1L730.0 598.5L728.9 604.0L726.9 606.0L725.8 602.0L723.8 603.2L724.4 598.1ZM724.1 611.0L728.1 611.7L732.3 609.8L736.6 606.7L735.2 606.4L730.9 607.1L726.6 609.8L724.1 610.2ZM734.3 604.8L739.4 604.8L744.3 604.0L744.6 601.7L740.9 602.0L736.6 602.8ZM685.4 575.2L687.4 572.5L685.4 565.6L682.5 560.9L679.7 559.5L680.6 564.2L684.0 570.2ZM675.4 567.9L677.4 564.2L676.3 561.8L674.0 564.7ZM628.5 520.7L634.2 519.5L638.5 515.3L644.1 511.7L649.8 510.4L644.1 514.1L638.5 518.3L632.8 521.9ZM645.0 534.9L651.3 532.1L659.8 529.9L654.1 531.6L648.4 534.3ZM669.7 542.4L672.6 538.1L671.2 543.4ZM752.2 602.0L753.1 598.1L752.5 602.0ZM708.1 579.6L710.4 579.2L711.0 576.1L708.7 576.5ZM679.1 574.8L681.7 575.2L680.8 570.2L678.8 571.2ZM668.9 546.5L671.7 546.0L672.0 538.7L669.7 539.2ZM750.0 574.3L753.1 571.2L751.9 574.3ZM755.1 584.0L757.4 583.1L755.9 582.2ZM776.4 558.5L780.7 557.0L777.8 559.9ZM760.8 557.5L763.6 554.1L762.2 558.0ZM742.3 560.4L748.0 558.5L745.1 560.9ZM716.7 709.9L719.5 709.1L719.0 707.3L717.0 707.9ZM715.0 706.7L716.7 705.9L715.8 707.0ZM665.5 573.9L666.9 572.5L665.5 572.5ZM691.1 581.4L693.1 579.6L691.6 579.2ZM695.3 583.1L697.3 583.1L696.8 584.0ZM659.8 543.4L662.6 541.8L661.2 543.9ZM648.4 510.4L654.1 509.2L651.3 512.3ZM686.8 540.8L689.7 539.2L688.2 541.3ZM676.9 553.6L679.7 552.1L678.3 554.6ZM617.1 518.3L620.0 519.5L618.5 520.7ZM733.7 592.8L735.2 592.8L734.3 593.6ZM762.8 595.6L763.6 594.4L763.3 596.0ZM706.7 651.5L704.2 651.2L705.3 652.2ZM730.9 661.2L732.0 661.6L731.5 662.8ZM1051.5 743.1L1052.3 741.1L1056.6 740.8L1058.6 742.6L1058.0 746.0L1056.6 748.8L1053.7 749.1L1051.8 746.0ZM1044.6 751.4L1045.8 754.5L1047.5 760.2L1049.8 766.0L1048.1 766.3L1045.2 760.2L1044.4 754.5ZM1058.0 768.8L1060.0 773.2L1060.6 779.0L1061.4 782.8L1059.7 782.5L1058.6 776.1L1058.0 771.7ZM1063.7 728.9L1064.8 731.7L1065.7 734.6L1064.6 734.3L1063.4 730.9ZM1048.9 738.3L1050.6 735.4L1049.5 735.7L1048.1 738.0ZM1001.1 703.8L1002.8 703.2L1002.0 705.0ZM1054.0 676.0L1055.2 672.9L1054.6 672.6L1053.2 676.0ZM1043.2 742.3L1045.8 743.1L1044.9 742.0ZM1043.8 746.5L1044.6 748.5L1043.8 748.0ZM1041.8 768.0L1043.8 766.3L1043.2 768.3ZM1042.4 792.0L1039.5 792.9L1042.7 790.5ZM1127.7 598.1L1130.0 594.8L1129.1 594.0L1127.1 596.0ZM1133.4 593.6L1136.2 591.1L1134.8 590.7L1132.5 592.4ZM1170.4 596.0L1173.2 591.9L1177.5 590.7L1183.2 591.9L1186.6 590.7L1184.6 593.2L1177.5 592.8L1173.5 595.6L1171.8 598.1ZM1178.0 608.3L1181.2 606.7L1183.7 607.5L1181.2 609.4ZM1256.3 569.8L1258.5 570.2L1262.8 567.0L1268.5 560.9L1272.8 553.6L1273.6 550.1L1271.3 550.6L1268.5 556.1L1264.2 562.3L1260.0 567.5ZM1048.1 527.1L1050.9 527.1L1054.6 524.2L1053.7 520.1L1049.5 517.1L1046.6 520.1L1048.1 524.2ZM1060.9 521.3L1063.7 521.3L1064.3 515.3L1060.9 510.4L1059.4 515.3L1059.7 520.1ZM996.9 535.4L999.7 534.9L1001.1 531.6L998.3 531.0ZM1002.0 539.2L1003.4 535.4L1002.5 534.9L1001.4 539.2ZM1038.7 538.1L1040.4 533.8L1039.0 532.7L1038.4 535.4ZM1082.2 622.9L1085.0 623.6L1085.3 621.4L1083.0 621.1ZM1089.3 627.2L1091.6 626.5L1090.7 624.0L1089.3 624.7ZM1088.7 616.6L1090.7 615.5L1089.9 616.2ZM1244.3 629.3L1247.7 627.9L1246.3 629.7ZM1245.7 579.2L1247.5 571.2L1246.3 571.2ZM1224.4 577.0L1227.3 574.8L1225.3 573.9ZM1336.5 600.1L1339.0 597.3L1337.3 596.8ZM1199.7 590.3L1203.1 585.7L1200.2 584.8L1198.2 589.0ZM1192.6 594.4L1194.5 592.8L1193.1 592.4ZM1291.3 655.4L1293.2 653.5L1291.8 653.8ZM1257.1 705.9L1258.8 703.8L1256.6 703.8ZM1217.3 650.2L1220.1 649.5L1218.7 648.9Z" fill="#aad3df"/><path d="M611.4 581.4L690.5 581.4L692.2 582.7L699.6 584.4L706.4 585.7L711.0 584.8L720.1 590.7L721.2 591.9L723.8 594.8L726.6 596.8L726.9 606.0L726.6 607.5L724.9 609.1L729.5 609.1L736.6 606.7L736.6 604.8L739.4 603.6L743.7 601.7L748.0 598.1L757.9 598.1L759.9 596.4L761.3 593.2L762.2 591.1L764.5 588.0L767.0 588.4L768.4 589.5L768.4 595.2L769.6 597.3L770.7 598.5M560.2 458.9L560.2 525.4L565.9 526.5L570.2 532.7L575.9 528.8L581.6 535.4L585.8 543.4L591.5 548.6L591.5 552.6M628.2 643.9L635.0 643.2L634.8 643.9L645.6 647.9L653.5 647.9L653.5 646.2L658.4 646.2L662.6 649.9L664.1 653.2L667.8 655.4L669.7 652.8L672.9 652.8L675.4 656.4L678.3 660.3L679.7 663.8L684.8 665.4M699.0 700.0L699.0 697.7L700.5 695.3L704.2 695.3L703.9 694.1L701.3 691.9L702.5 691.9L702.5 690.2L707.7 690.2L707.6 695.9L708.4 695.9M707.7 690.2L708.7 689.6L710.1 688.1M710.4 696.5L707.6 699.1L707.1 700.3L705.0 702.2M707.1 700.3L709.6 701.5L711.6 703.2M713.0 704.4L714.7 702.1L717.2 701.5L720.1 699.1L724.6 698.5M717.5 709.9L720.4 710.2L723.2 710.5M725.5 718.6L726.3 714.3M741.1 716.9L741.7 719.2L739.7 721.2M757.4 684.5L757.1 687.8L757.2 689.6M758.3 707.8L755.1 709.9L753.7 713.7L755.1 717.4L755.9 720.6L761.9 721.7L763.9 724.3L769.3 724.0L768.4 728.9L769.9 734.6L770.7 738.3M770.7 738.3L762.8 738.6L763.6 743.1L762.2 742.3L762.5 753.7M762.5 753.7L761.9 749.4L753.7 748.2L747.1 742.0M747.1 742.0L744.3 740.6L740.9 739.7L737.2 737.7M747.1 742.0L746.5 746.0L743.1 749.1L738.6 751.4L737.4 754.8L735.2 755.9L732.6 754.2L732.9 751.4M770.7 738.3L775.3 739.7L778.7 737.7L781.0 735.4L779.3 734.6L777.5 730.0L782.7 730.3L787.8 728.9L788.6 726.9M788.6 726.9L786.7 724.9L787.5 722.6L789.8 721.5L791.2 718.0M788.6 726.9L790.3 726.9L790.9 728.9L792.1 730.6L790.9 734.6L791.8 736.6L794.0 738.0L799.2 736.3L800.6 736.3M798.9 724.9L798.3 727.5L796.3 730.3L798.3 732.3L800.6 736.3M807.7 725.2L806.6 727.5L807.1 731.7L806.0 735.2M800.6 736.3L802.3 736.0L806.0 735.2L810.8 735.4L814.2 729.7M762.5 753.7L759.9 753.7L753.9 756.2L751.1 762.5L753.7 768.0L755.9 770.3L760.5 769.1L760.5 773.2L763.3 773.0M763.3 773.0L766.5 773.2L771.9 770.0L775.3 769.4L775.6 774.6L778.4 777.5L782.7 779.0L787.8 780.5L789.5 781.3L790.1 788.4L795.2 788.7L795.5 791.7L797.7 794.4L796.9 796.8L796.0 799.2L795.9 800.2M763.3 773.0L765.9 777.5L765.0 783.4L763.9 786.6L764.5 787.8L763.3 791.7L763.6 792.3M763.6 792.3L761.1 794.8M763.6 792.3L766.5 798.3L766.5 802.5L767.9 804.3L768.2 808.3L770.2 808.3M770.2 808.3L773.0 805.3L775.8 806.2L778.4 808.3L779.5 805.9L783.2 806.6M783.2 806.6L785.2 799.8L793.2 797.7L795.9 800.2M795.9 800.2L796.6 806.2L802.9 806.8L803.7 812.1L806.8 812.4L806.0 817.1M783.2 806.6L787.8 811.4L790.6 812.1L797.2 816.1L794.6 822.2L802.0 822.5L806.0 817.1M806.0 817.1L808.6 819.0L808.3 822.2L802.6 825.7L797.5 831.9M797.5 831.9L802.3 834.5L806.3 836.5L810.0 840.2L809.4 843.6M797.5 831.9L795.8 837.9L795.2 844.6M770.2 808.3L770.7 812.1L766.7 813.9L766.5 819.3L762.8 828.0L761.3 834.5L762.2 841.2L762.2 845.7L760.8 851.6L759.3 856.9L759.3 862.3L757.1 869.8M936.3 610.2L938.0 609.4L942.5 610.2L943.7 611.4L941.7 613.6L941.7 616.6L940.0 618.5L941.4 621.1L940.5 623.2L941.4 624.0L940.0 626.5L940.3 627.6M956.2 604.4L959.3 606.4L963.3 607.1L966.1 607.9L970.4 608.3M982.6 602.8L983.2 601.3L980.9 600.5L981.2 597.3L980.6 594.8L981.2 594.4M981.2 594.4L980.6 592.4L978.7 593.2L978.7 591.5L981.2 588.6L982.9 587.4M981.2 594.4L983.8 594.4L985.2 592.4L986.9 594.8L987.8 591.9L990.0 593.2L991.2 590.3M982.9 587.4L985.8 586.9L988.6 587.8L988.6 589.5L991.2 590.3M982.9 587.4L982.9 585.2L984.6 581.4L982.3 580.5L979.5 579.2L977.8 579.2L975.0 577.0L973.2 577.0L973.0 575.7L969.8 573.4L968.4 572.1M971.0 570.7L973.5 570.7L975.5 570.2L977.8 571.6L978.4 573.4M978.4 573.4L978.9 575.7L978.7 576.5L979.8 577.9L979.5 579.2M978.7 576.5L977.8 579.2M978.4 573.4L978.7 570.2L978.4 568.4L980.6 568.4L981.2 566.6L981.5 562.3M985.8 554.1L988.3 554.6M1001.7 559.0L1002.3 562.3L1001.4 564.2L1003.1 567.5L1003.1 570.2L1004.0 572.5M1004.0 572.5L1002.0 572.5L998.3 574.8L996.0 575.7L996.9 577.9L1000.6 582.2M1000.6 582.2L998.3 584.4L998.0 586.9L998.3 587.8L996.0 587.4L992.3 588.2L990.3 588.6L988.6 587.8M991.2 590.3L992.6 590.7L996.0 589.5L996.6 591.1L1000.3 591.9M1000.3 591.9L999.7 594.0L1000.6 595.6M1000.3 591.9L1002.8 592.4L1006.8 591.1L1007.1 590.5M1007.1 590.5L1008.2 588.2L1009.9 585.7M1000.6 582.2L1003.1 583.1L1004.0 581.4L1009.4 582.7L1009.9 585.7M1004.0 572.5L1006.8 574.3L1007.7 573.9L1009.4 575.2L1011.6 575.7L1014.2 577.4L1014.9 579.2M1014.9 579.2L1012.8 580.9L1010.2 582.2L1009.5 583.1M1014.9 579.2L1016.8 578.7L1018.2 580.5L1021.0 579.6L1025.3 580.9M1009.9 585.7L1011.9 586.7L1014.8 586.5L1017.6 584.8L1019.6 583.5L1023.0 584.0L1024.3 584.0L1025.3 580.9M1025.3 580.9L1025.9 578.7L1029.6 574.3L1029.6 573.0L1028.4 570.2M1028.4 570.2L1028.4 567.5L1027.3 566.6L1029.3 564.7L1028.1 559.0M1028.1 559.0L1026.2 556.5L1017.1 556.3M1026.2 556.5L1025.6 553.3L1021.9 552.1M1021.2 548.2L1023.9 546.5L1029.6 547.0L1032.4 547.5L1037.0 550.1M1037.0 550.1L1035.3 554.1L1034.7 557.5L1030.7 559.0L1028.1 559.0M1030.6 538.8L1033.3 538.1L1036.7 540.8L1039.1 540.5M1039.1 540.5L1040.4 541.8L1041.5 547.8M1041.5 547.8L1039.8 549.6L1037.0 550.1M1040.9 529.9L1039.2 533.8L1039.5 538.7L1039.1 540.5M1041.5 547.8L1047.2 549.3L1049.2 550.6L1048.9 554.6L1051.8 558.5L1054.3 561.4L1050.3 562.8L1051.8 567.5M1051.8 567.5L1048.1 571.2L1044.4 569.8L1040.4 569.8L1033.3 568.4L1029.6 569.8L1028.4 570.2M1051.8 567.5L1057.4 566.6L1059.1 568.9L1062.0 572.5L1062.6 575.2L1068.0 575.2L1069.4 577.4L1075.4 578.7L1074.5 583.1L1074.2 586.5L1070.0 589.5M1024.3 584.0L1026.4 585.7L1032.1 586.9L1037.0 584.6M1037.0 584.6L1039.5 583.5L1044.4 585.7L1046.3 591.9L1043.8 593.2L1041.5 596.0M1037.0 584.6L1041.2 590.7L1041.5 596.0L1045.5 596.8M1026.4 585.7L1023.9 587.8L1021.9 591.5L1019.0 593.4M1019.0 593.4L1015.1 594.4M1015.1 594.4L1011.1 594.4L1008.2 591.9L1007.1 590.5M1000.0 596.2L1002.8 595.6L1004.8 596.0L1006.0 593.2L1008.2 591.9M1006.1 598.9L1006.2 597.3L1009.4 597.3L1012.5 597.7L1015.3 598.5M1006.1 598.9L1007.4 601.3L1010.5 604.8L1011.5 606.0L1013.8 607.7M1015.3 598.5L1015.6 600.9L1016.8 603.6L1015.9 604.0L1014.5 605.2L1013.8 607.7M1015.3 598.5L1015.6 596.0L1015.1 594.4M1019.0 593.4L1022.5 597.3L1022.2 598.9L1025.3 599.3L1025.9 601.3M1025.9 601.3L1025.0 604.0L1026.7 605.2L1025.0 608.7M1015.9 604.0L1019.0 606.7L1018.5 607.5L1019.9 610.2L1022.5 608.9L1025.0 608.7M1016.5 610.4L1017.3 607.5L1018.5 607.5M1019.9 610.2L1019.6 612.5L1020.5 614.0L1021.0 614.2M1021.0 614.2L1019.9 617.0L1018.2 618.5M1021.0 614.2L1023.9 613.1L1026.6 612.3M1025.0 608.7L1026.7 611.0L1026.6 612.3M1026.6 612.3L1031.0 611.7L1033.3 612.7L1036.1 611.0M1036.1 611.0L1037.0 612.5L1035.4 614.6M1036.1 611.0L1039.5 609.6L1041.0 609.9M1025.9 601.3L1026.7 602.8L1032.4 603.2L1038.1 601.7L1042.7 603.0M992.9 532.7L995.1 528.8L997.1 524.2L996.3 521.3L996.0 517.1L995.4 507.3L996.0 505.4M1040.4 523.9L1044.6 519.5L1050.9 509.8L1046.6 504.7M940.7 553.2L938.3 556.3L940.5 558.0L942.5 558.2L943.5 558.0M955.0 635.0L956.2 637.4L956.5 641.1L957.9 644.9L951.1 646.9L950.8 649.2L946.5 652.5L942.8 653.5L939.7 654.1L936.6 656.4L936.6 659.8M936.6 659.8L923.8 659.8M936.6 660.9L936.6 665.1L927.2 665.1L927.2 673.1L924.3 674.4L924.3 679.6L912.9 679.6M936.6 660.9L947.6 668.2M947.6 668.2L964.6 680.3L964.7 681.5L970.4 684.2L970.7 686.6L973.4 686.2M973.4 686.2L977.8 685.3L982.6 681.0L995.4 672.9M995.4 672.9L994.0 670.4L990.5 669.5L989.5 663.5L989.3 657.7L988.5 651.5M988.5 651.5L987.0 645.2L984.9 643.9L982.6 639.1L984.9 634.6L984.9 630.0L985.8 628.4M988.5 651.5L990.3 647.5L994.0 643.5L994.2 641.7M1032.8 646.7L1032.1 650.5L1032.4 654.8L1032.4 677.5L1032.4 683.6L1029.6 683.6L1029.6 685.1M1029.6 685.1L1004.0 674.4M995.4 672.9L1001.7 675.7L1004.0 674.4M1032.4 677.5L1066.3 677.5M1058.7 648.2L1060.6 653.8M947.6 668.2L942.6 668.2L945.4 694.1L946.1 694.6L945.7 697.1L934.6 697.2L930.9 697.4L928.6 696.8L926.6 699.3M926.6 699.3L922.9 695.3L920.1 693.7L915.8 694.1L914.4 695.4M926.6 699.3L927.2 702.4L928.6 706.0M913.5 702.6L918.6 702.1L922.0 702.9L922.0 703.8L917.2 703.8L913.8 704.1M913.8 706.3L916.6 706.0L922.3 705.4L926.3 706.4L928.6 706.0M922.3 705.4L922.3 708.2L919.5 708.8L918.6 710.3M928.6 706.0L932.0 706.7L934.8 706.4L936.3 708.8L937.7 710.2L938.5 712.5M923.5 715.9L925.7 713.4L929.4 713.1L931.1 715.7L932.0 717.4M932.0 717.4L934.3 717.9L934.8 720.6L937.1 720.0M932.0 717.4L928.6 721.9M937.1 720.0L938.0 717.4L938.5 712.5M937.1 720.0L937.4 723.2L940.0 725.2L939.8 729.3M938.5 712.5L943.7 711.4L945.7 711.8M945.7 711.8L948.2 714.0L953.5 713.4M953.2 710.2L953.5 713.4L953.6 719.2L952.2 722.3L953.1 725.7L952.5 727.2M953.2 710.2L960.9 709.9L963.9 710.2M960.9 709.9L962.2 712.2L962.7 717.4L963.3 721.7L964.7 724.3M963.9 710.2L965.3 715.1L966.0 723.9M963.9 710.2L967.8 706.7L968.1 706.6M968.1 706.6L971.5 708.2M971.5 708.2L972.1 711.7L969.3 716.0L969.0 723.5M945.7 711.8L946.5 707.9L948.8 705.3L950.2 703.2L953.1 701.5L955.6 699.4L959.3 698.4L962.0 698.7M962.0 698.7L961.9 701.5L964.1 703.4L967.3 705.3L968.1 706.6M962.0 698.7L971.3 697.4L973.2 693.8L973.4 686.2M971.5 708.2L972.5 705.0L973.1 702.9L981.2 704.3L986.9 704.8L991.2 703.5L996.9 704.1L1000.0 702.4M1000.0 702.4L999.7 700.0L1005.4 692.9L1005.7 688.1L1006.8 682.7L1004.0 674.4M1001.4 704.1L1002.8 708.8L1000.6 710.2L998.8 714.3L996.3 717.4L994.0 722.9L990.3 722.0L987.8 723.5L986.3 725.2L985.8 728.0M1000.0 702.4L1001.4 704.1L1002.8 705.3L1004.3 707.9L1004.3 711.1L1005.4 713.1L1001.7 713.1L1000.8 714.0L1004.5 717.4L1005.4 720.3M1005.4 720.3L1009.7 719.7L1014.2 718.6L1015.3 716.0L1019.3 715.7L1023.0 711.4L1026.4 710.4M1026.4 710.4L1024.7 705.3L1023.3 705.0L1025.3 701.2L1026.4 697.1L1029.6 696.5L1029.6 685.1M1005.4 720.3L1002.8 724.9L1003.1 728.6L1006.0 730.6L1007.1 733.4L1007.4 735.4M1007.4 735.4L1007.1 736.9L999.1 735.4L993.6 735.4L989.2 735.2M993.6 735.4L993.6 738.9L988.6 738.9M999.1 735.4L999.1 738.0L1002.3 737.9L1002.5 743.4L1000.8 748.5L996.9 748.2L994.3 750.0L992.9 752.9M1007.4 735.4L1008.2 732.6L1014.2 731.7M1014.2 731.7L1014.2 729.2L1016.8 727.2L1025.0 730.0L1031.0 727.2L1039.2 727.3M1026.4 710.4L1030.1 716.9L1033.3 720.3L1036.4 722.9L1039.2 727.3M1014.2 731.7L1012.8 735.2L1011.9 740.8L1011.4 743.4L1007.4 748.0L1006.8 751.7L1002.8 755.7L999.4 755.4L998.3 754.8L996.0 758.2M996.0 758.2L995.4 755.9M996.3 758.8L998.8 758.5L1008.5 758.5L1009.4 762.2L1016.5 764.5L1015.3 761.7L1023.3 762.5L1023.6 769.1L1024.7 773.8L1029.6 773.2M1029.6 773.2L1029.6 779.0L1023.9 779.0L1023.9 788.4L1027.9 792.6M1029.6 773.2L1033.3 773.8L1035.3 775.8L1038.7 774.9L1042.1 777.5L1043.8 780.2L1046.1 780.2L1046.1 776.5L1042.1 775.5L1042.1 768.3L1048.8 765.1M1039.2 727.3L1045.2 729.2L1049.2 731.7M1049.2 731.7L1050.3 735.4L1046.5 739.4L1045.5 745.7L1043.8 749.4L1044.5 754.2M1049.2 731.7L1057.7 729.7M1057.7 729.7L1060.9 736.9L1059.4 738.6L1057.7 741.4L1057.7 744.5M1057.7 744.5L1048.1 744.7L1045.5 745.7M1048.1 744.7L1049.1 748.2L1048.1 748.5L1043.8 749.4M1048.1 748.5L1048.9 751.1L1046.3 754.2L1044.9 754.4M1057.7 744.5L1068.5 750.5L1068.8 751.9L1072.8 754.9M1079.6 746.4L1077.9 744.3L1077.9 733.7L1080.5 730.5M1080.5 730.5L1073.9 731.7L1069.7 731.5L1066.3 729.2L1063.4 728.6L1057.7 729.7M1080.5 730.5L1085.0 728.0L1089.3 727.5L1097.8 718.9L1095.0 718.9L1086.5 716.0L1083.6 714.3L1083.5 710.3M1083.5 710.3L1080.2 710.1L1081.9 705.9L1083.9 705.3M1083.5 710.3L1084.3 708.9M1081.9 705.9L1077.4 701.2L1072.2 699.6L1069.1 698.8L1065.3 700.7M1065.3 700.7L1065.0 698.2L1066.5 692.5L1071.1 689.6M1065.3 700.7L1064.0 705.3L1061.1 707.9L1060.7 710.7L1058.9 711.7L1058.3 714.6M1058.3 714.6L1057.2 717.7L1055.2 719.2L1060.0 722.6L1061.7 726.3L1063.4 728.6M1058.3 714.6L1055.7 712.5L1055.7 706.7L1052.6 707.3L1051.8 711.7L1048.9 713.8L1045.2 713.7L1040.9 715.1L1036.7 714.6L1032.4 712.2L1030.1 716.9M1076.2 771.7L1069.4 774.1L1065.1 775.2L1060.7 774.9M1058.0 768.8L1054.9 768.6L1049.5 766.3L1048.8 765.1M1054.9 768.6L1056.0 772.6L1056.0 777.2L1054.3 780.8L1055.7 781.9M1055.7 781.9L1059.1 783.1L1059.7 785.7L1058.9 786.9L1061.7 791.1L1061.7 788.4L1063.4 784.6L1060.6 780.5L1059.7 776.1L1060.7 774.9M1055.7 781.9L1047.2 784.3L1047.8 786.6M1047.8 786.6L1043.5 787.8L1038.1 793.6L1033.1 793.2M1047.8 786.6L1050.3 787.8L1054.9 789.9L1055.2 793.2L1054.9 795.3L1054.3 801.3L1050.3 807.1M1033.1 793.2L1035.3 798.3L1040.1 801.3L1044.8 806.5L1050.3 807.1M1050.3 807.1L1052.3 813.6L1052.2 818.2L1049.5 818.3L1048.9 820.9L1050.3 822.5L1052.6 821.0L1052.2 818.2M1052.6 821.0L1054.9 821.0M1038.1 829.9L1042.4 826.7L1044.9 829.6L1042.1 833.2L1039.0 832.2L1038.1 829.9M1044.8 806.5L1040.9 808.3L1037.8 810.8L1034.1 817.1L1026.7 816.1L1020.5 821.0L1018.2 814.6M1018.2 805.9L1018.2 826.0L1015.3 827.6L1010.8 827.0L1008.2 826.7M1018.2 805.9L1021.0 805.9L1021.0 794.7L1027.9 792.6L1033.1 793.2M994.9 791.5L999.7 790.8L1001.7 792.0L1013.6 792.0L1022.2 793.8L1027.9 792.6M1063.4 632.2L1065.4 631.1L1065.4 629.0L1069.4 629.0L1075.1 629.0L1081.8 627.9L1088.7 627.7M1088.7 627.7L1087.0 623.2L1087.6 619.6L1088.7 618.5M1088.7 618.5L1085.6 617.0L1085.0 613.2L1082.2 612.1L1079.5 611.7M1075.1 604.4L1080.8 605.2L1085.9 607.5L1089.9 607.1L1093.3 610.2M1093.3 610.2L1094.1 612.5L1089.3 612.5L1085.0 613.2M1089.3 612.5L1091.0 614.4L1092.1 616.6L1091.9 618.1L1093.6 619.2L1093.6 621.4M1093.3 610.2L1095.8 612.5L1099.5 610.4M1088.7 618.5L1093.6 621.4L1097.8 618.5L1098.7 620.0L1100.4 623.1M1081.8 627.9L1078.8 630.4L1077.9 637.4L1071.7 640.8M1071.7 640.8L1066.0 644.5L1063.1 643.0M1063.4 636.5L1064.8 636.7L1065.4 638.1L1063.3 640.8L1062.6 641.3M1061.1 641.8L1062.6 641.3L1062.4 644.2L1062.3 647.2L1060.9 653.7M1060.7 654.3L1064.0 654.8L1065.1 653.8L1068.0 652.2L1069.4 650.5L1066.5 647.2L1072.2 645.5L1072.8 645.0M1072.8 645.0L1071.7 640.8M1072.8 645.0L1076.2 645.7L1080.8 648.5L1088.4 654.8L1093.3 655.1L1093.7 655.1M1093.7 655.1L1097.0 651.8L1097.8 652.2M1093.7 655.1L1096.4 657.1L1099.0 656.9M1088.7 627.7L1090.4 631.8L1092.1 632.5L1092.7 635.0L1090.7 639.1L1092.1 641.8L1096.7 645.2L1097.0 648.9L1097.8 650.5L1099.4 652.3M1083.0 694.4L1084.5 691.1L1087.9 691.4L1094.4 692.0L1095.0 692.8L1097.8 689.0L1109.2 686.6M1109.2 686.6L1117.7 683.6L1119.6 677.5L1118.3 675.4M1118.3 675.4L1110.9 674.6L1108.1 670.7M1105.9 669.0L1107.2 669.6M1118.3 675.4L1120.0 670.7L1121.7 668.4M1109.2 686.6L1112.3 693.7M1114.6 627.0L1117.2 626.7L1121.2 624.3L1124.0 623.8L1127.4 625.9L1130.0 626.5L1133.1 629.5L1135.4 629.5L1135.4 633.0M1135.4 633.0L1133.7 637.7L1134.4 647.2L1136.8 647.5L1134.4 652.7M1134.4 652.7L1136.5 655.8L1139.9 657.9L1139.9 660.9L1141.4 663.0L1137.4 664.1L1136.5 667.6M1134.4 652.7L1139.1 654.1L1143.9 653.8L1149.9 652.5L1150.2 649.2L1154.2 647.5L1158.4 645.9L1159.0 642.2L1161.3 640.8L1160.1 638.8L1163.5 638.4L1165.0 634.6L1164.7 632.2L1167.5 629.0L1170.4 628.6L1174.3 627.4M1135.4 633.0L1138.5 634.3L1140.8 632.3L1144.8 630.8L1148.2 626.3L1150.5 627.0M1150.5 627.0L1154.2 627.6M1154.2 627.6L1158.4 627.9L1161.0 626.1L1161.3 623.2L1164.1 623.6L1164.7 629.3L1168.1 627.6L1169.8 626.7L1174.3 627.4M1150.5 627.0L1150.5 624.7L1147.9 624.0L1143.3 621.1L1142.5 619.6L1138.8 617.0L1137.4 613.2L1132.3 612.1L1132.0 609.1L1127.7 607.1L1125.7 609.1L1123.4 612.5L1120.6 612.5M1120.6 612.5L1118.9 612.5L1117.6 609.8L1114.9 608.7L1110.5 610.8M1120.6 612.5L1120.6 598.1L1127.7 595.6L1134.8 600.5L1137.7 604.0L1145.9 603.2L1149.3 606.0L1149.0 609.8L1150.5 610.2L1154.4 613.1L1157.6 612.1L1161.8 609.6L1163.1 608.9M1163.1 608.9L1163.8 606.7L1170.4 608.3L1170.4 606.0L1172.6 605.2L1176.9 606.4L1186.6 606.7L1189.4 609.1M1189.4 609.1L1191.1 605.4L1190.0 599.7L1188.6 598.5L1196.0 597.3L1195.4 596.0L1197.4 589.0L1204.5 589.7L1205.1 584.0L1208.2 582.2L1209.8 580.9M1209.8 580.9L1203.6 578.7L1197.4 572.5L1188.9 573.4L1182.9 561.8L1178.9 557.5L1173.8 559.5L1170.1 560.9L1170.9 558.2L1163.8 557.0L1163.5 555.1L1157.6 551.6L1146.8 556.8L1134.8 558.7L1135.4 563.3L1137.9 563.3L1134.8 566.6L1136.8 571.2L1132.0 573.2L1128.0 572.3L1119.7 574.5L1116.9 572.5L1110.1 569.3L1105.8 569.1L1099.8 574.3L1095.8 575.7L1094.4 580.1L1093.6 583.7L1095.0 584.4L1098.4 586.9L1100.7 591.1L1101.2 592.6M1189.4 609.1L1184.3 612.1L1180.0 613.6L1178.3 615.9L1174.1 615.7L1171.2 618.1L1170.8 619.4M1170.8 619.4L1171.2 622.5L1174.6 626.5L1174.3 627.4M1170.8 619.4L1165.5 620.0L1162.1 618.8L1158.4 618.8L1161.8 617.4L1162.1 616.6L1165.2 616.6L1168.9 614.4L1166.1 612.9L1164.7 612.5L1161.0 611.7L1163.1 608.9M1154.2 627.6L1155.9 624.0L1153.9 618.8L1157.6 616.6L1161.8 614.0L1162.1 616.6M1174.3 627.4L1177.2 631.8L1182.6 633.6L1185.2 638.4L1185.4 643.9L1185.2 648.2L1191.7 651.5M1155.3 672.3L1163.3 670.1L1162.1 666.0L1161.0 663.2L1161.5 658.7L1165.8 659.0L1168.7 655.4L1170.1 652.5L1173.5 648.5L1173.8 643.9L1171.8 638.8L1172.6 636.0L1179.8 636.3L1182.6 633.6M1191.7 651.5L1189.1 656.1L1198.2 660.6L1200.5 660.3L1205.4 663.2L1211.6 663.8L1212.0 659.0M1191.7 651.5L1194.8 651.2L1200.8 655.8L1205.1 657.7L1205.9 658.8L1212.0 659.0M1212.0 659.0L1213.9 658.5L1215.9 658.4L1222.1 659.3M1214.2 661.1L1216.7 662.8L1223.3 662.4L1222.1 659.3M1222.1 659.3L1226.4 656.7L1228.7 655.1L1234.9 654.1L1235.5 657.4L1238.2 658.0M1214.6 677.8L1213.9 673.8L1211.9 669.5L1212.5 665.4L1214.2 663.8L1216.7 665.1L1216.9 667.3L1223.8 667.9L1224.1 668.8L1220.7 671.0L1220.9 674.1L1222.4 673.5L1223.8 672.3L1224.7 677.5L1224.7 679.7L1223.8 681.5M1224.7 677.5L1226.4 676.9L1226.4 671.3L1230.4 667.6L1230.7 666.6L1232.1 662.8L1234.9 660.9L1237.2 661.6L1238.2 658.0M1238.2 658.0L1242.0 660.0L1242.0 665.4L1238.9 668.8L1238.6 671.3L1242.6 671.0L1242.0 671.7L1244.3 674.8L1243.8 677.2L1246.0 679.1L1249.0 678.9M1249.0 678.9L1250.9 680.0L1250.9 676.3L1251.9 676.3M1251.9 676.3L1256.8 675.8L1260.8 673.5L1264.8 675.1L1264.5 677.5L1265.7 678.1L1268.5 678.9M1249.0 678.9L1246.0 682.6M1246.0 682.6L1242.9 684.2L1239.5 684.8L1239.2 688.7L1241.8 694.4L1242.6 694.7L1240.6 698.2L1243.5 702.9L1243.2 704.1L1244.6 708.2L1242.3 712.2M1246.0 682.6L1247.2 685.1L1249.4 685.1L1249.2 691.1L1251.7 689.0L1253.4 690.1L1256.8 688.7L1259.4 691.4L1259.3 694.1L1261.7 696.5L1261.4 699.7L1260.5 700.6M1260.5 700.6L1254.0 700.9L1252.6 702.6L1252.9 705.0L1254.0 708.3M1251.9 676.3L1254.0 678.4L1254.8 681.2L1258.8 682.4L1257.4 684.5L1260.3 687.5L1264.2 692.9L1267.1 698.2L1267.4 699.4M1267.4 699.4L1264.2 700.0L1260.5 700.6M1267.4 699.4L1267.1 706.2L1262.5 708.5L1262.2 710.5L1258.4 712.0M1246.0 723.3L1248.9 725.2L1251.7 724.0M1273.1 735.9L1273.3 738.9L1275.6 739.1L1280.4 737.6L1287.3 737.7L1289.8 733.2L1290.4 729.7L1291.3 729.5L1295.8 729.7M1362.4 749.1L1362.4 767.7M1316.9 766.4L1317.1 768.7M1211.0 580.7L1211.6 583.1L1217.3 586.1L1220.1 591.5L1219.9 597.3L1227.3 598.3L1232.7 600.9L1235.5 606.9L1245.7 607.3L1250.9 607.9L1260.0 611.4L1267.1 608.1L1272.2 608.1L1279.6 603.2L1279.3 598.1L1285.6 598.3L1289.8 596.2L1293.2 592.6L1295.2 591.5L1302.1 591.3L1296.4 587.1L1298.4 585.9L1290.1 586.1L1293.2 577.6M1209.8 580.9L1211.0 580.7L1216.4 577.4L1223.8 573.2L1230.4 576.8L1238.1 578.1L1240.9 574.5L1239.5 572.5L1242.6 567.5L1252.0 570.9L1252.3 574.3L1256.3 576.3L1260.8 574.8L1264.8 575.4L1270.2 579.8L1276.5 580.7L1283.0 578.5L1286.4 575.7L1293.2 577.6M1293.2 577.6L1296.4 579.2L1300.1 577.0L1300.6 574.3L1302.6 569.3L1304.9 565.2L1305.5 561.8L1312.9 560.7L1318.6 563.0L1319.7 565.2L1324.0 576.1L1324.3 577.9L1331.1 581.8L1333.1 581.8L1333.9 586.9L1344.4 584.2L1342.5 588.6L1339.9 597.7L1335.3 598.1L1334.8 602.0L1334.5 604.4L1332.9 608.3M1332.9 608.3L1330.8 606.0L1330.2 608.1L1325.7 609.8L1325.4 611.9L1322.3 610.8L1317.7 614.9L1315.0 617.4M1320.0 625.6L1326.4 622.5" fill="none" stroke="#a06088" stroke-opacity="0.42" stroke-width="0.8" stroke-linejoin="round"/></g><use href="#wm" x="-1024"/><rect x="448.5" y="508.6" width="1" height="350" fill="#e8e8e8" opacity="0.5"/><rect x="704.5" y="508.6" width="1" height="350" fill="#e8e8e8" opacity="0.5"/><rect x="960.5" y="508.6" width="1" height="350" fill="#e8e8e8" opacity="0.5"/><rect x="1216.5" y="508.6" width="1" height="350" fill="#e8e8e8" opacity="0.5"/></svg><div class="b" style="left:291.3px;top:519.3px;width:29.4px;height:59.4px;border:1.5px solid rgba(0,0,0,0.26);border-radius:4.5px;background-clip:padding-box;background:#f4f4f4;overflow:hidden"><div class="b" style="left:0;top:0;width:30px;height:29.2px;background:#fff;border-bottom:1px solid #ccc"></div><div class="b" style="left:8.3px;top:25.9px;width:12.4px;height:2.6px;background:#000"></div><div class="b" style="left:13.2px;top:21px;width:2.6px;height:12.4px;background:#000"></div><div class="b" style="left:9.2px;top:56.5px;width:12px;height:1.1px;background:#bbb"></div></div>
<div class="b" style="left:941.8px;top:575.4px;width:15.6px;height:15.6px;border:2px solid #fff;border-radius:50%;background:#b91c1c;box-shadow:0 1px 3px rgba(0,0,0,0.35);overflow:hidden"><span class="t" style="left:1.2px;top:8.3px;font-size:10.5px;font-weight:700;color:#fff;transform:scaleX(1.12)">50</span></div>
<div class="clip" style="left:1126px;top:842px;width:234.5px;height:16.6px;background:rgba(255,255,255,0.8)"><div class="b" style="left:5px;top:5px;width:12px;height:4px;background:#4c7be1"></div><div class="b" style="left:5px;top:9px;width:12px;height:4px;background:#ffd500"></div><span class="t" style="left:21.00px;top:9.20px;font-size:12.00px;color:#333333;transform:scaleX(0.9917);"><span style="color:#0078a8">Leaflet</span> | © OpenStreetMap contributors</span></div>

<span class="t" style="left:76.60px;top:37.01px;font-size:21.07px;color:#0f172a;font-weight:700;transform:scaleX(0.9677);">CyberGuard</span>
<span class="t" style="left:76.60px;top:63.41px;font-size:13.70px;color:#64748b;transform:scaleX(1.0879);">by Y.Leonard</span>
<span class="t" style="left:54.00px;top:132.40px;font-size:15.80px;color:#ffffff;font-weight:700;transform:scaleX(0.8798);">Dashboard</span>
<span class="t" style="left:28.00px;top:180.40px;font-size:11.59px;color:#1e293b;font-weight:700;transform:scaleX(0.9209);">SECURITY OPERATIONS</span>
<span class="t" style="left:28.00px;top:352.01px;font-size:11.59px;color:#1e293b;font-weight:700;transform:scaleX(0.9119);">THREAT INTELLIGENCE</span>
<span class="t" style="left:28.00px;top:566.01px;font-size:11.59px;color:#1e293b;font-weight:700;transform:scaleX(0.9121);">INFRASTRUCTURE</span>
<span class="t" style="left:28.00px;top:780.01px;font-size:11.59px;color:#1e293b;font-weight:700;transform:scaleX(0.9052);">CLOUD SERVICES</span>
<span class="t" style="left:54.40px;top:221.01px;font-size:14.75px;color:#0f172a;transform:scaleX(0.9071);-webkit-text-stroke:0.3px #0f172a;">SOC</span>
<span class="t" style="left:54.40px;top:263.01px;font-size:14.75px;color:#0f172a;transform:scaleX(0.8987);-webkit-text-stroke:0.3px #0f172a;">XDR</span>
<span class="t" style="left:54.40px;top:305.01px;font-size:14.75px;color:#0f172a;transform:scaleX(0.9151);-webkit-text-stroke:0.3px #0f172a;">SIEM</span>
<span class="t" style="left:54.40px;top:393.01px;font-size:14.75px;color:#0f172a;-webkit-text-stroke:0.3px #0f172a;">Threat Feeds</span>
<span class="t" style="left:54.40px;top:435.01px;font-size:14.75px;color:#0f172a;transform:scaleX(1.0308);-webkit-text-stroke:0.3px #0f172a;">AI Analytics</span>
<span class="t" style="left:54.40px;top:477.01px;font-size:14.75px;color:#0f172a;transform:scaleX(1.0233);-webkit-text-stroke:0.3px #0f172a;">VirusTotal</span>
<span class="t" style="left:54.40px;top:519.01px;font-size:14.75px;color:#0f172a;transform:scaleX(1.0184);-webkit-text-stroke:0.3px #0f172a;">Automation</span>
<span class="t" style="left:54.40px;top:607.01px;font-size:14.75px;color:#0f172a;transform:scaleX(1.0127);-webkit-text-stroke:0.3px #0f172a;">Management</span>
<span class="t" style="left:54.40px;top:649.01px;font-size:14.75px;color:#0f172a;transform:scaleX(1.0306);-webkit-text-stroke:0.3px #0f172a;">Security Modules</span>
<span class="t" style="left:54.40px;top:691.01px;font-size:14.75px;color:#0f172a;transform:scaleX(0.9146);-webkit-text-stroke:0.3px #0f172a;">SASE</span>
<span class="t" style="left:54.40px;top:733.01px;font-size:14.75px;color:#0f172a;transform:scaleX(1.0454);-webkit-text-stroke:0.3px #0f172a;">Monitoring</span>
<div class="clip" style="left:0px;top:800px;width:255px;height:31.00px"><span class="t" style="left:54.40px;top:22.21px;font-size:14.75px;color:#0f172a;transform:scaleX(1.0458);-webkit-text-stroke:0.3px #0f172a;">Microsoft 365</span></div>
<span class="t" style="left:24.00px;top:866.60px;font-size:12.12px;color:#ffffff;font-weight:700;transform:scaleX(1.0333);">YL</span>
<div class="clip" style="left:50px;top:850px;width:150px;height:18.00px"><span class="t" style="left:10.00px;top:10.62px;font-size:14.75px;color:#0f172a;-webkit-text-stroke:0.3px #0f172a;">yann Leonard</span></div>
<div class="clip" style="left:50px;top:870px;width:150px;height:14.00px"><span class="t" style="left:10.00px;top:8.72px;font-size:12.64px;color:#94a3b8;transform:scaleX(0.9886);">admin</span></div>
<span class="t" style="left:272.60px;top:30.60px;font-size:25.29px;color:#0f172a;font-weight:700;transform:scaleX(0.9808);">Security</span>
<span class="t" style="left:272.60px;top:62.60px;font-size:25.29px;color:#0f172a;font-weight:700;transform:scaleX(0.9627);">Operations</span>
<span class="t" style="left:272.60px;top:94.60px;font-size:25.29px;color:#0f172a;font-weight:700;transform:scaleX(0.9796);">Center</span>
<span class="t" style="left:468.00px;top:55.01px;font-size:14.75px;color:#2a9d8f;transform:scaleX(0.9852);">OpenSearch</span>
<span class="t" style="left:468.00px;top:75.01px;font-size:14.75px;color:#2a9d8f;">Connected</span>
<span class="t" style="left:578.00px;top:55.01px;font-size:14.75px;color:#64748b;transform:scaleX(0.8862);">GTEK</span>
<span class="t" style="left:578.00px;top:75.01px;font-size:14.75px;color:#64748b;">Organization</span>
<span class="t" style="left:699.00px;top:64.62px;font-size:14.75px;color:#64748b;">Search agents, alerts, logs...</span>
<div class="clip" style="left:939px;top:54px;width:26px;height:20.00px"><span class="t" style="left:8.00px;top:12.00px;font-size:9.48px;color:#64748b;transform:scaleX(0.9846);">^K</span></div>
<div class="clip" style="left:1020px;top:40px;width:22px;height:17.60px"><span class="t" style="left:5.40px;top:11.51px;font-size:10.54px;color:#ffffff;font-weight:700;transform:scaleX(0.9570);">65</span></div>
<span class="t" style="left:1185.60px;top:65.40px;font-size:14.75px;color:#0f172a;transform:scaleX(0.9087);-webkit-text-stroke:0.3px #0f172a;">YL</span>
<span class="t" style="left:1230.00px;top:57.01px;font-size:14.75px;color:#0f172a;-webkit-text-stroke:0.3px #0f172a;">yann Leonard</span>
<span class="t" style="left:1230.00px;top:75.00px;font-size:12.64px;color:#64748b;transform:scaleX(0.9829);">GTEK Organization</span>
<span class="t" style="left:299.00px;top:166.00px;font-size:12.64px;color:#0f172a;font-weight:700;transform:scaleX(0.9648);">Last updated: 18:53:52</span>
<span class="t" style="left:459.40px;top:164.81px;font-size:14.75px;color:#64748b;transform:scaleX(0.9608);">Time Range:</span>
<div class="clip" style="left:550px;top:150px;width:126px;height:24.40px"><span class="t" style="left:11.40px;top:14.81px;font-size:14.75px;color:#0f172a;">Last Hour</span></div>
<span class="t" style="left:867.00px;top:164.81px;font-size:14.75px;color:#64748b;transform:scaleX(1.0250);">Auto-refresh:</span>
<div class="clip" style="left:964px;top:150px;width:78px;height:25.00px"><span class="t" style="left:12.60px;top:14.81px;font-size:14.75px;color:#0f172a;transform:scaleX(0.9268);">5m</span></div>
<span class="t" style="left:1140.00px;top:164.62px;font-size:14.75px;color:#0f172a;transform:scaleX(0.9873);-webkit-text-stroke:0.3px #0f172a;">Refresh</span>
<span class="t" style="left:1253.60px;top:164.62px;font-size:14.75px;color:#0f172a;transform:scaleX(0.9228);-webkit-text-stroke:0.3px #0f172a;">CSV</span>
<span class="t" style="left:1344.40px;top:164.62px;font-size:14.75px;color:#0f172a;transform:scaleX(0.9017);-webkit-text-stroke:0.3px #0f172a;">PDF</span>
<span class="t" style="left:305.40px;top:261.01px;font-size:14.75px;color:#64748b;transform:scaleX(1.0182);">Active Agents</span>
<span class="t" style="left:303.33px;top:287.02px;font-size:29.50px;color:#0f172a;font-weight:700;transform:scaleX(1.1800);">5</span>
<span class="t" style="left:305.40px;top:317.01px;font-size:14.75px;color:#2a9d8f;transform:scaleX(1.0248);">of 8 total</span>
<span class="t" style="left:581.40px;top:261.01px;font-size:14.75px;color:#64748b;transform:scaleX(1.0167);">Critical Alerts</span>
<span class="t" style="left:579.33px;top:287.02px;font-size:29.50px;color:#ef4444;font-weight:700;transform:scaleX(1.1800);">4</span>
<span class="t" style="left:581.40px;top:317.01px;font-size:14.75px;color:#ef4444;">Requires attention</span>
<span class="t" style="left:857.40px;top:261.01px;font-size:14.75px;color:#64748b;transform:scaleX(1.0134);">High Vulnerabilities</span>
<span class="t" style="left:855.33px;top:287.02px;font-size:29.50px;color:#e76f51;font-weight:700;transform:scaleX(1.1800);">0</span>
<span class="t" style="left:857.40px;top:317.01px;font-size:14.75px;color:#e76f51;transform:scaleX(1.0262);">Security risks</span>
<span class="t" style="left:1133.40px;top:261.01px;font-size:14.75px;color:#64748b;">Patches Available</span>
<span class="t" style="left:1133.40px;top:287.02px;font-size:29.50px;color:#e9c46a;font-weight:700;transform:scaleX(0.9140);">112</span>
<span class="t" style="left:1133.40px;top:317.01px;font-size:14.75px;color:#e9c46a;transform:scaleX(0.9915);">Ready to install</span>
<span class="t" style="left:334.00px;top:420.01px;font-size:25.29px;color:#0f172a;font-weight:700;transform:scaleX(0.9130);">Global Attack Map</span>
<span class="t" style="left:305.40px;top:443.62px;font-size:14.75px;color:#64748b;transform:scaleX(1.0243);">Real-time geographic distribution of security attacks</span>
<span class="t" style="left:325.20px;top:486.00px;font-size:12.64px;color:#0f172a;transform:scaleX(0.9667);">Low</span>
<span class="t" style="left:384.60px;top:486.00px;font-size:12.64px;color:#0f172a;">Medium</span>
<span class="t" style="left:466.40px;top:486.00px;font-size:12.64px;color:#0f172a;transform:scaleX(0.9858);">High</span>
<span class="t" style="left:528.60px;top:486.00px;font-size:12.64px;color:#0f172a;transform:scaleX(1.0265);">Critical</span>
<span class="t" style="left:1146.00px;top:414.01px;font-size:25.29px;color:#0f172a;font-weight:700;transform:scaleX(1.0886);">50</span>
<span class="t" style="left:1142.60px;top:441.00px;font-size:12.64px;color:#64748b;transform:scaleX(0.9687);">Events</span>
<span class="t" style="left:1147.00px;top:455.62px;font-size:10.54px;color:#1e293b;transform:scaleX(0.9387);">1 hour</span>
<span class="t" style="left:1211.50px;top:414.01px;font-size:25.29px;color:#2563eb;font-weight:700;transform:scaleX(1.1800);">1</span>
<span class="t" style="left:1196.60px;top:441.00px;font-size:12.64px;color:#64748b;transform:scaleX(0.9886);">Sources</span>
<span class="t" style="left:1289.10px;top:414.01px;font-size:25.29px;color:#dc2626;font-weight:700;transform:scaleX(1.1800);">1</span>
<span class="t" style="left:1259.00px;top:441.00px;font-size:12.64px;color:#64748b;transform:scaleX(1.0161);">Critical zones</span>
</body></html>
